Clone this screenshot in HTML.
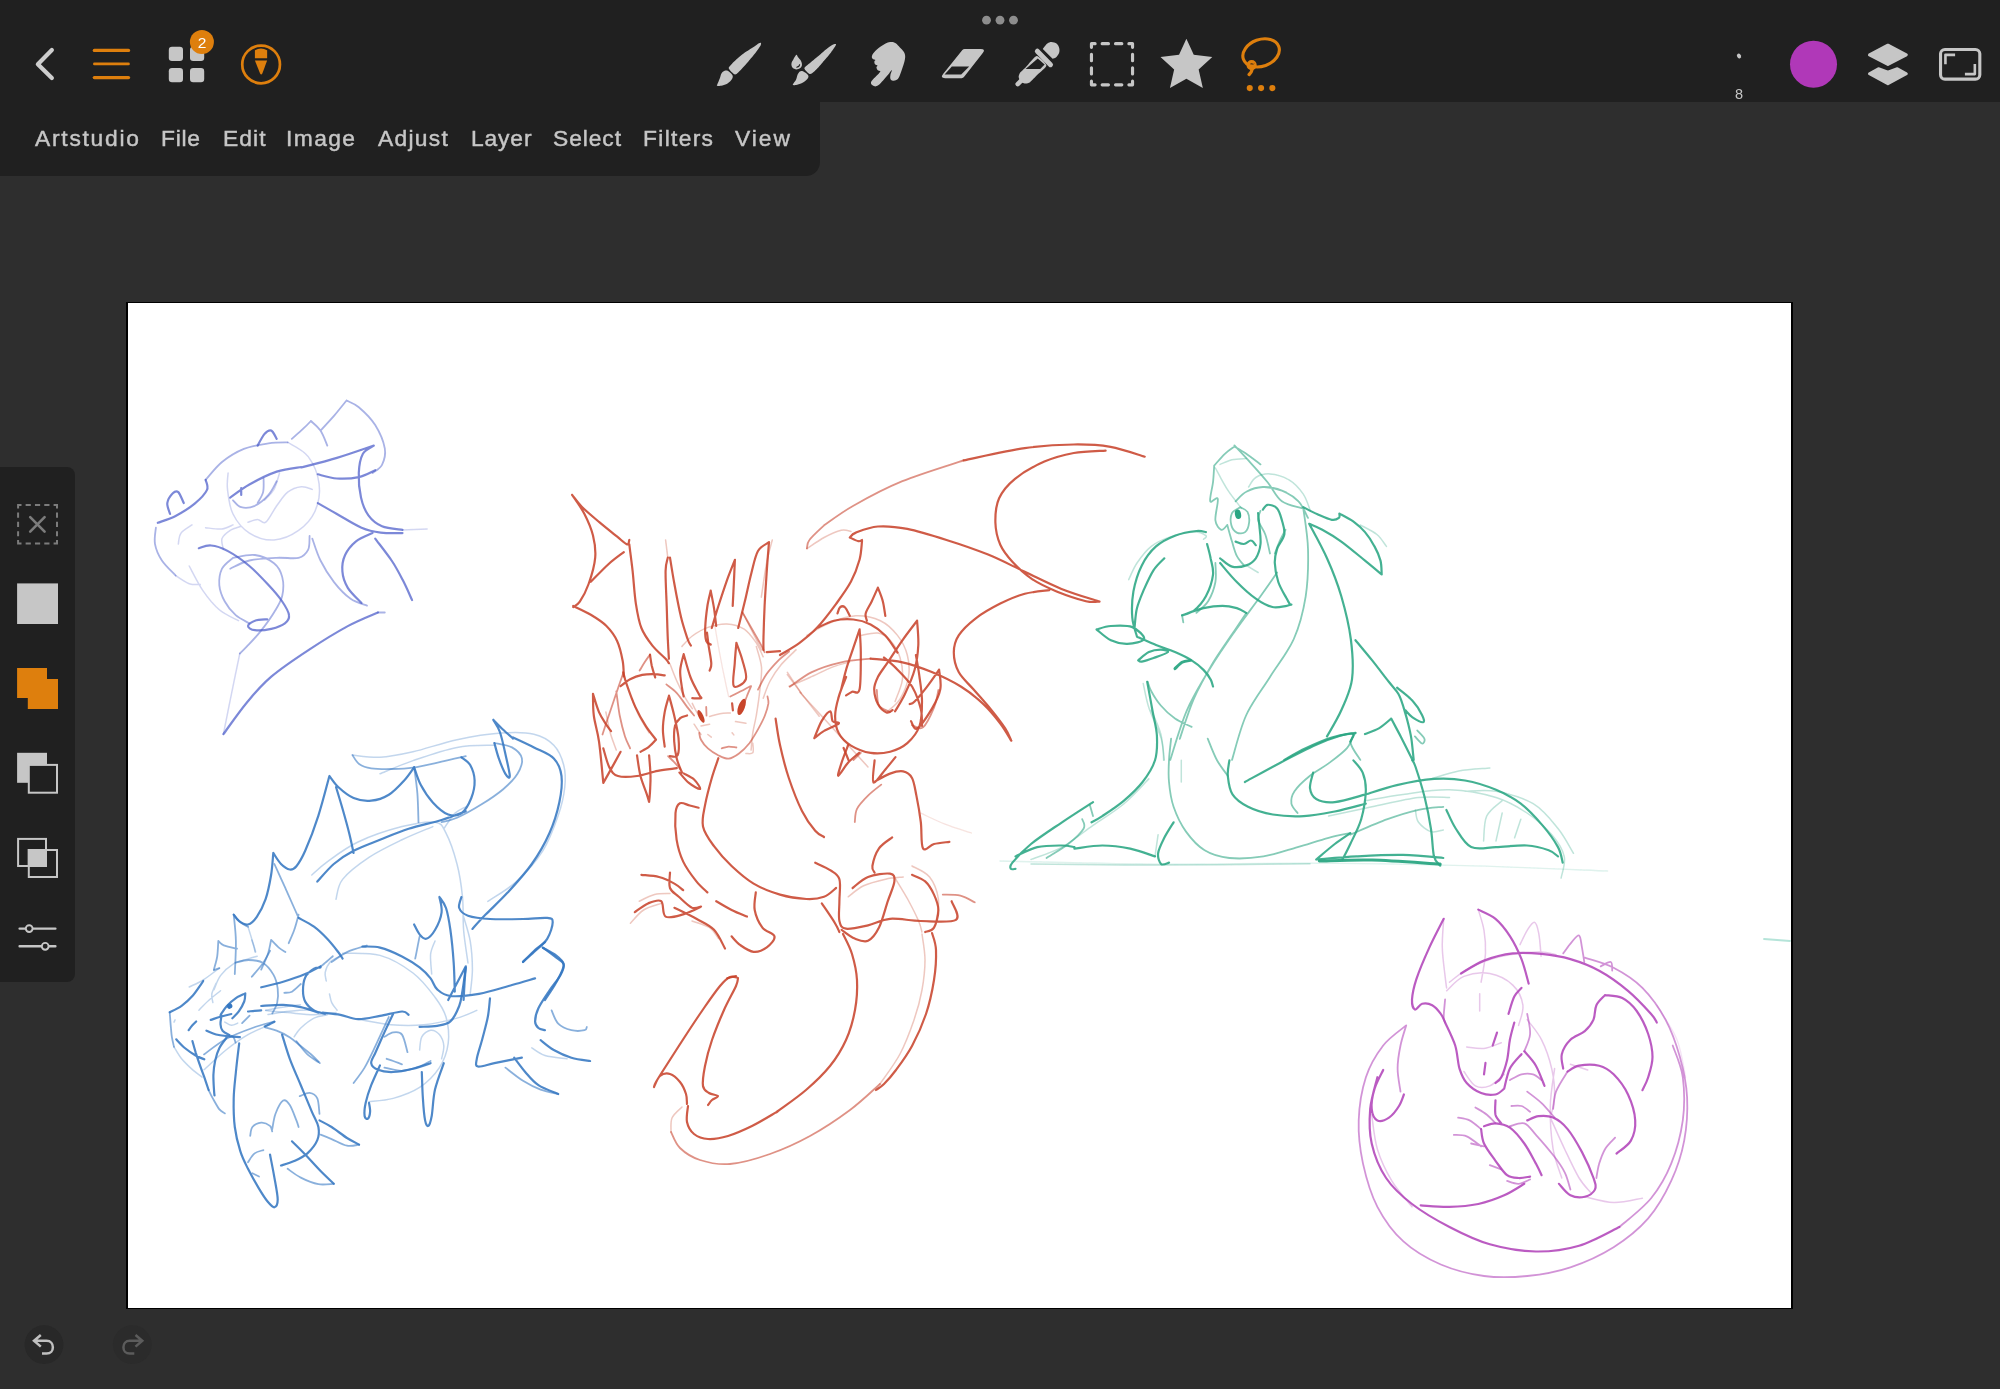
<!DOCTYPE html>
<html lang="en">
<head>
<meta charset="utf-8">
<title>Artstudio Pro</title>
<style>
html,body{margin:0;padding:0;}
body{width:2000px;height:1389px;overflow:hidden;background:#2e2e2e;position:relative;font-family:"Liberation Sans",sans-serif;}
#topbar{position:absolute;left:0;top:0;width:2000px;height:101.5px;background:#202020;}
#menubar{position:absolute;left:0;top:101px;width:819.8px;height:74.7px;background:#202020;border-bottom-right-radius:14px;}
#menubar span{will-change:transform;position:absolute;top:23.3px;font-size:22.8px;line-height:28px;color:#c6c6c6;white-space:nowrap;-webkit-text-stroke:0.45px #c6c6c6;}
#sidebar{position:absolute;left:0;top:467px;width:74.6px;height:514.5px;background:#202020;border-radius:0 8px 8px 0;}
#canvas{position:absolute;left:126px;top:301.5px;width:1667px;height:1007.5px;background:#000;}
#paper{position:absolute;left:128px;top:303px;width:1663px;height:1004.5px;background:#fff;}
svg{position:absolute;left:0;top:0;overflow:visible;}
#brushsize{will-change:transform;position:absolute;left:1727.7px;top:85.6px;width:22px;text-align:center;font-size:14.5px;line-height:16px;color:#c6c6c6;}
#badge{will-change:transform;position:absolute;left:189.9px;top:30.8px;width:24px;height:24px;color:#fff;font-size:15.5px;line-height:24px;text-align:center;}
</style>
</head>
<body>
<div id="topbar"></div>
<div id="menubar">
<span style="left:35px;letter-spacing:1.75px">Artstudio</span>
<span style="left:161px;letter-spacing:0.77px">File</span>
<span style="left:222.8px;letter-spacing:1.07px">Edit</span>
<span style="left:286px;letter-spacing:1.42px">Image</span>
<span style="left:378.3px;letter-spacing:1.28px">Adjust</span>
<span style="left:471px;letter-spacing:0.87px">Layer</span>
<span style="left:553.2px;letter-spacing:0.93px">Select</span>
<span style="left:643px;letter-spacing:1.32px">Filters</span>
<span style="left:734.5px;letter-spacing:2.0px">View</span>
</div>
<div id="sidebar"></div>
<div id="canvas"></div>
<div id="paper"></div>
<!--ART0-->
<svg id="art" width="2000" height="1389" viewBox="0 0 2000 1389" fill="none" stroke-linecap="round" stroke-linejoin="round">
<defs><filter id="soft" x="100" y="280" width="1720" height="1050" filterUnits="userSpaceOnUse"><feGaussianBlur stdDeviation="0.45"/></filter></defs>
<g filter="url(#soft)">
<path stroke="#4558c8" stroke-width="1.8" opacity="0.464" d="M320.5 430.6C322.8 428.1 329.8 420.6 334.2 415.6C338.5 410.5 344.4 403.0 346.5 400.5M346.5 400.5C348.5 401.6 354.0 403.2 358.8 407.3C363.6 411.4 370.9 418.3 375.2 425.1C379.5 432.0 383.6 441.8 384.8 448.4C385.9 455.0 384.1 460.7 382.0 464.8C380.0 468.9 374.0 471.6 372.5 473.0M291.8 438.8C293.6 437.2 299.5 432.2 302.7 429.2C305.9 426.3 309.6 422.4 310.9 421.0M310.9 421.0C312.5 422.6 317.8 426.5 320.5 430.6C323.2 434.7 326.2 443.1 327.3 445.6M205.6 479.8C208.4 476.9 215.7 467.2 222.0 462.0C228.4 456.9 236.2 452.0 243.9 448.9C251.7 445.8 261.2 444.5 268.5 443.4C275.8 442.4 284.5 442.5 287.7 442.4M155.9 527.7C155.7 530.4 154.0 538.6 155.0 544.1C156.0 549.6 158.5 555.3 161.9 560.5C165.3 565.7 173.3 573.0 175.6 575.5M233.0 500.3C234.3 501.5 237.5 506.3 241.2 507.2C244.8 508.1 250.3 507.8 254.9 505.8C259.4 503.7 264.9 499.0 268.5 494.9C272.2 490.8 275.4 483.5 276.7 481.2M257.6 503.1C258.5 501.2 262.1 496.2 263.1 492.1C264.1 488.0 263.5 480.7 263.6 478.5M230.2 568.7C233.4 567.3 241.6 562.3 249.4 560.5C257.1 558.7 268.5 558.2 276.7 557.8C284.9 557.3 293.4 559.1 298.6 557.8C303.9 556.4 306.4 553.2 308.2 549.6C310.0 545.9 309.3 538.2 309.6 535.9M233.0 557.8C231.2 559.6 224.3 564.1 222.0 568.7C219.8 573.3 218.9 579.6 219.3 585.1C219.8 590.6 222.0 596.5 224.8 601.5C227.5 606.5 231.6 611.5 235.7 615.2C239.8 618.8 247.1 622.0 249.4 623.4M233.0 557.8C236.6 557.3 248.0 554.1 254.9 555.0C261.7 555.9 269.4 559.6 274.0 563.2C278.6 566.9 280.8 571.4 282.2 576.9C283.6 582.4 283.6 590.1 282.2 596.0C280.8 602.0 277.6 606.5 274.0 612.5C270.4 618.4 264.9 625.9 260.3 631.6C255.8 637.3 250.1 643.0 246.7 646.6C243.2 650.3 241.0 652.3 239.8 653.5M312.3 538.6C313.7 542.3 316.8 553.2 320.5 560.5C324.1 567.8 329.2 576.0 334.2 582.4C339.2 588.8 345.1 594.9 350.6 598.8C356.0 602.7 364.2 604.5 367.0 605.6M384.8 612.5L377.9 612.5"/>
<path stroke="#4558c8" stroke-width="2.2" opacity="0.704" d="M301.3 467.5C307.3 465.9 324.8 461.6 336.9 457.9C349.0 454.3 367.7 447.7 373.8 445.6M373.8 445.6C372.0 447.0 365.4 449.3 362.9 453.8C360.4 458.4 359.1 465.7 358.8 473.0C358.5 480.3 359.4 490.5 361.0 497.6C362.6 504.7 364.8 510.6 368.4 515.4C371.9 520.2 376.3 523.9 382.0 526.3C387.7 528.7 399.1 529.3 402.5 529.9M317.8 474.3C320.9 475.0 330.1 478.0 336.9 478.5C343.7 478.9 352.4 478.5 358.8 477.1C365.2 475.7 372.5 471.4 375.2 470.2M257.6 445.6C258.7 443.7 262.2 436.7 264.4 434.1C266.7 431.6 269.2 429.8 271.3 430.6C273.3 431.4 275.8 437.4 276.7 438.8M157.8 522.8C160.7 521.6 169.4 519.1 175.6 515.9C181.7 512.7 189.5 507.9 194.7 503.6C199.9 499.3 205.2 493.9 207.0 489.9C208.8 486.0 205.9 481.5 205.6 479.8M170.1 514.0C169.6 512.2 166.9 506.5 167.3 503.1C167.8 499.6 171.0 495.0 172.8 493.2C174.6 491.4 176.5 490.5 178.3 492.1C180.1 493.8 182.8 501.2 183.8 503.1M230.2 497.6C233.4 495.4 241.6 488.8 249.4 484.5C257.1 480.1 268.1 474.5 276.7 471.6C285.4 468.7 297.2 467.7 301.3 467.0M241.2 488.0L241.2 494.9M198.8 548.2C200.8 547.7 206.3 545.0 211.1 545.5C215.9 545.9 221.1 547.5 227.5 550.9C233.9 554.3 242.6 560.3 249.4 566.0C256.2 571.7 263.1 579.2 268.5 585.1C274.0 591.0 278.8 596.5 282.2 601.5C285.6 606.5 288.6 611.5 289.0 615.2C289.5 618.8 287.9 621.1 284.9 623.4C282.0 625.7 276.3 627.7 271.3 628.9C266.3 630.0 258.7 630.7 254.9 630.2C251.0 629.8 248.0 627.7 248.0 626.1C248.0 624.5 251.7 621.8 254.9 620.7C258.0 619.5 265.1 619.5 267.2 619.3M317.8 503.1C320.9 504.9 329.6 509.9 336.9 514.0C344.2 518.1 354.2 524.6 361.5 527.7C368.8 530.8 373.8 531.7 380.7 532.6C387.5 533.5 398.9 533.1 402.5 533.1M372.5 533.1C369.7 534.5 360.6 537.7 356.0 541.3C351.5 545.0 347.4 550.0 345.1 555.0C342.8 560.0 341.9 566.0 342.4 571.4C342.8 576.9 344.6 582.6 347.8 587.8C351.0 593.1 359.2 600.4 361.5 602.9M375.2 538.6C377.9 542.3 387.0 553.7 391.6 560.5C396.2 567.3 399.1 573.0 402.5 579.6C406.0 586.2 410.5 596.7 412.1 600.1M377.9 612.5C372.9 614.7 359.2 620.0 347.8 626.1C336.4 632.3 322.3 640.9 309.6 649.4C296.8 657.8 281.8 667.8 271.3 676.7C260.8 685.6 254.6 693.1 246.7 702.7C238.7 712.3 227.3 728.9 223.4 734.1"/>
<path stroke="#4558c8" stroke-width="1.5" opacity="0.24" d="M402.5 529.9L427.1 529.0M287.7 442.4C291.1 444.7 302.9 449.6 308.2 456.6C313.4 463.5 318.0 474.8 319.1 483.9C320.3 493.0 318.4 503.5 315.0 511.3C311.6 519.0 305.5 525.6 298.6 530.4C291.8 535.2 282.2 539.5 274.0 540.0C265.8 540.4 256.2 537.5 249.4 533.1C242.6 528.8 236.6 521.3 233.0 514.0C229.3 506.7 228.3 496.2 227.5 489.4C226.7 482.6 228.0 475.7 228.1 473.0M175.6 575.5C177.8 576.9 185.1 582.2 189.2 583.7C193.3 585.2 198.3 584.4 200.2 584.6M264.4 500.3C266.0 498.5 271.5 493.9 274.0 489.4C276.5 484.8 278.6 475.7 279.5 473.0M248.0 522.2C249.6 521.8 254.6 519.5 257.6 519.5C260.6 519.5 262.6 524.5 265.8 522.2C269.0 519.9 273.1 510.8 276.7 505.8C280.4 500.8 283.6 495.3 287.7 492.1C291.8 488.9 297.2 487.1 301.3 486.7C305.5 486.2 310.5 488.9 312.3 489.4M223.4 549.6C223.2 547.7 220.9 541.8 222.0 538.6C223.2 535.4 227.1 532.5 230.2 530.4C233.4 528.4 239.4 527.0 241.2 526.3M178.3 544.1C178.7 542.3 178.7 536.3 181.0 533.1C183.3 530.0 190.1 526.3 192.0 524.9M205.6 527.7C208.4 527.9 217.5 529.5 222.0 529.0C226.6 528.6 231.2 525.6 233.0 524.9M239.8 653.5C238.7 658.9 235.7 672.8 233.0 686.3C230.2 699.7 225.0 726.2 223.4 734.1M189.2 566.0C191.5 570.1 197.9 583.3 202.9 590.6C207.9 597.9 213.4 604.7 219.3 609.7C225.2 614.7 235.3 618.8 238.5 620.7"/>
<path stroke="#3577c2" stroke-width="2.2" opacity="0.88" d="M493.3 719.9C494.9 721.5 499.9 726.7 503.2 729.8C506.5 732.9 511.5 737.1 513.1 738.6M513.1 737.5C516.6 739.1 527.2 743.9 534.0 747.4C540.8 750.9 549.2 753.6 553.8 758.4C558.4 763.2 560.6 768.7 561.5 776.0C562.4 783.3 561.3 792.9 559.3 802.4C557.3 811.9 554.0 822.9 549.4 833.2C544.8 843.5 538.8 854.1 531.8 864.0C524.8 873.9 515.3 884.2 507.6 892.6C499.9 901.0 491.5 908.6 485.6 914.6C479.7 920.6 474.6 926.5 472.4 928.9M493.3 719.9C494.4 721.9 497.9 726.3 499.9 732.0C501.9 737.7 503.8 746.7 505.4 754.0C507.0 761.3 509.8 772.7 509.8 776.0C509.8 779.3 507.2 776.7 505.4 773.8C503.6 770.9 500.6 763.5 498.8 758.4C497.0 753.3 495.1 745.6 494.4 743.0M329.4 776.0C330.9 777.8 334.2 783.3 338.2 787.0C342.2 790.7 348.1 795.7 353.6 798.0C359.1 800.3 365.3 801.2 371.2 800.6C377.1 800.1 383.3 798.1 388.8 794.7C394.3 791.3 400.0 785.0 404.2 780.4C408.4 775.8 412.5 769.4 414.1 767.2M414.1 767.2C415.2 770.1 417.6 778.9 420.7 784.8C423.8 790.7 428.2 797.4 432.8 802.4C437.4 807.4 443.4 812.7 448.2 814.5C453.0 816.3 457.5 816.1 461.4 813.4C465.2 810.6 469.1 803.5 471.3 798.0C473.5 792.5 474.8 785.9 474.6 780.4C474.4 774.9 472.4 768.9 470.2 765.0C468.0 761.1 462.9 758.6 461.4 757.3M329.4 776.0C327.6 782.6 322.4 803.1 318.4 815.6C314.4 828.1 308.9 842.4 305.2 850.8C301.5 859.2 299.0 863.1 296.4 866.2C293.8 869.3 292.4 869.9 289.8 869.5C287.2 869.1 283.8 866.8 281.0 864.0C278.2 861.2 274.6 854.8 273.3 853.0M336.0 787.0C337.1 790.7 340.4 801.3 342.6 809.0C344.8 816.7 347.4 825.9 349.2 833.2C351.0 840.5 352.9 849.7 353.6 853.0M273.3 853.0C272.9 856.7 272.4 867.3 271.1 875.0C269.8 882.7 268.0 892.2 265.6 899.2C263.2 906.2 259.7 912.6 256.8 916.8C253.9 921.0 250.9 923.8 248.0 924.5C245.1 925.2 241.6 922.9 239.2 921.2C236.8 919.6 234.6 915.7 233.7 914.6M317.3 881.6C320.1 878.7 327.8 869.1 333.8 864.0C339.9 858.9 345.9 854.8 353.6 850.8C361.3 846.8 370.8 843.5 380.0 839.8C389.2 836.1 398.3 832.1 408.6 828.8C418.9 825.5 432.1 822.9 441.6 820.0C451.1 817.1 461.8 812.7 465.8 811.2M461.4 897.0C461.0 898.8 458.1 904.9 459.2 908.0C460.3 911.1 462.9 913.9 468.0 915.7C473.1 917.5 480.8 918.5 490.0 919.0C499.2 919.5 513.5 919.2 523.0 919.0C532.5 918.8 542.2 917.4 547.2 917.9C552.2 918.4 552.7 918.8 552.7 922.3C552.7 925.8 550.3 933.8 547.2 938.8C544.1 943.8 538.0 948.1 534.0 952.0C530.0 955.9 524.8 960.2 523.0 961.9M542.8 947.6C545.0 949.2 552.5 954.6 556.0 957.5C559.5 960.4 563.7 961.0 563.7 965.2C563.7 969.4 559.1 977.0 556.0 982.8C552.9 988.6 546.8 997.1 545.0 1000.0M414.1 924.5C415.0 926.1 417.6 932.0 419.6 934.4C421.6 936.8 423.6 939.5 426.2 938.8C428.8 938.1 432.4 934.4 435.0 930.0C437.6 925.6 440.9 917.9 441.6 912.4C442.3 906.9 439.8 899.6 439.4 897.0M439.4 897.0C440.5 898.8 444.2 902.5 446.0 908.0C447.8 913.5 449.1 920.8 450.4 930.0C451.7 939.2 453.0 952.7 453.7 963.0C454.4 973.3 454.6 986.8 454.8 991.6M298.6 917.9C301.2 919.4 309.2 923.2 314.0 926.7C318.8 930.2 323.2 934.6 327.2 938.8C331.2 943.0 335.6 948.7 338.2 952.0C340.8 955.3 341.9 957.5 342.6 958.6M362.4 946.5C365.3 946.7 373.4 946.0 380.0 947.6C386.6 949.2 395.4 953.1 402.0 956.4C408.6 959.7 414.8 963.7 419.6 967.4C424.4 971.1 427.7 974.7 430.6 978.4C433.5 982.1 433.9 986.5 437.2 989.4C440.5 992.3 443.4 995.3 450.4 996.0C457.4 996.7 468.7 995.6 479.0 993.8C489.3 992.0 502.6 987.6 512.0 985.0C521.4 982.4 531.2 979.5 535.1 978.4M465.8 966.3C465.6 968.7 465.1 975.0 464.7 980.6C464.3 986.2 463.8 996.7 463.6 1000.0M465.8 966.3C464.0 969.8 457.7 981.6 454.8 987.2C451.9 992.8 449.3 997.8 448.2 1000.0"/>
<path stroke="#3577c2" stroke-width="1.5" opacity="0.3" d="M352.5 755.1C357.1 755.5 369.9 757.8 380.0 757.3C390.1 756.8 400.2 754.7 413.0 751.8C425.8 748.9 442.3 742.8 457.0 739.7C471.7 736.6 488.2 734.0 501.0 733.1C513.8 732.2 525.2 732.2 534.0 734.2C542.8 736.2 548.8 740.1 553.8 745.2C558.8 750.3 561.9 758.0 563.7 765.0C565.5 772.0 565.7 778.6 564.8 787.0C563.9 795.4 561.9 805.0 558.2 815.6C554.5 826.2 549.8 839.8 542.8 850.8C535.8 861.8 525.6 873.2 516.4 881.6C507.2 890.0 492.6 898.1 487.8 901.4M380.0 773.8C385.5 771.6 400.2 765.0 413.0 760.6C425.8 756.2 443.4 750.0 457.0 747.4C470.6 744.8 488.2 745.6 494.4 745.2M311.8 875.0C314.4 872.8 319.5 867.3 327.2 861.8C334.9 856.3 345.5 847.9 358.0 842.0C370.5 836.1 389.2 829.9 402.0 826.6C414.8 823.3 427.7 821.1 435.0 822.2C442.3 823.3 442.3 826.2 446.0 833.2C449.7 840.2 454.2 853.4 457.0 864.0C459.8 874.6 461.4 886.0 462.5 897.0C463.6 908.0 462.7 919.0 463.6 930.0C464.5 941.0 467.3 957.5 468.0 963.0M336.0 899.2C337.1 895.9 337.1 886.4 342.6 879.4C348.1 872.4 359.1 864.0 369.0 857.4C378.9 850.8 391.4 844.9 402.0 839.8C412.6 834.7 427.7 828.8 432.8 826.6M443.8 828.8C445.6 826.2 451.1 817.1 454.8 813.4C458.5 809.7 464.0 807.9 465.8 806.8M248.0 926.7C248.7 929.1 251.1 936.8 252.4 941.0C253.7 945.2 255.1 950.2 255.7 952.0M435.0 941.0C434.3 943.2 431.2 948.7 430.6 954.2C430.1 959.7 431.5 970.7 431.7 974.0M463.6 916.8C464.7 920.8 468.7 932.2 470.2 941.0C471.7 949.8 472.4 960.8 472.4 969.6C472.4 978.4 470.6 989.8 470.2 993.8"/>
<path stroke="#3577c2" stroke-width="1.8" opacity="0.58" d="M352.5 755.1C353.6 756.6 356.0 761.7 359.1 763.9C362.2 766.1 365.9 767.5 371.2 768.3C376.5 769.1 384.0 769.1 391.0 769.0C398.0 768.9 404.6 768.9 413.0 767.6C421.4 766.4 432.8 763.6 441.6 761.7C450.4 759.8 461.8 757.1 465.8 756.2M494.4 743.0C497.3 743.7 507.4 744.8 512.0 747.4C516.6 750.0 521.0 754.0 521.9 758.4C522.8 762.8 520.6 768.7 517.5 773.8C514.4 778.9 509.2 784.1 503.2 789.2C497.1 794.3 488.9 799.8 481.2 804.6C473.5 809.4 463.6 814.9 457.0 817.8C450.4 820.7 444.2 821.5 441.6 822.2M414.1 767.2C414.7 771.6 416.7 784.4 417.4 793.6C418.1 802.8 418.3 817.4 418.5 822.2M274.4 864.0C276.2 868.0 282.1 880.9 285.4 888.2C288.7 895.5 292.0 903.0 294.2 908.0C296.4 913.0 297.9 916.2 298.6 917.9M419.6 936.6C419.2 938.4 418.1 943.9 417.4 947.6C416.7 951.3 415.6 956.8 415.2 958.6M298.6 914.6C297.9 917.2 295.9 925.2 294.2 930.0C292.5 934.8 289.6 941.0 288.7 943.2M233.7 914.6C234.1 919.0 235.7 931.1 235.9 941.0C236.1 950.9 235.0 968.5 234.8 974.0M233.7 914.6C234.8 915.9 237.9 920.3 240.3 922.3C242.7 924.3 246.7 926.0 248.0 926.7M218.3 941.0C219.2 941.7 220.7 944.1 223.8 945.4C226.9 946.7 234.8 948.2 237.0 948.7M218.3 941.0C218.1 943.6 217.9 951.6 217.2 956.4C216.5 961.2 214.4 967.4 213.9 969.6M271.1 939.9C272.4 941.2 276.4 945.6 278.8 947.6C281.2 949.6 284.3 951.3 285.4 952.0M271.1 939.9C270.6 942.3 269.5 949.2 267.8 954.2C266.1 959.2 262.3 967.0 261.2 969.6"/>
<path stroke="#3577c2" stroke-width="1.8" opacity="0.58" d="M208.6 1090.0C209.3 1091.4 211.0 1095.2 212.8 1098.4C214.6 1101.6 217.4 1106.9 219.4 1109.4C221.4 1111.9 224.0 1112.7 224.9 1113.4M333.8 1183.8C331.2 1183.8 323.9 1185.2 318.4 1184.2C312.9 1183.2 305.9 1180.2 300.8 1177.6C295.7 1175.0 289.8 1170.3 287.6 1168.8M359.1 1144.6C357.1 1144.8 351.6 1146.6 347.0 1145.7C342.4 1144.8 336.0 1140.9 331.6 1139.1C327.2 1137.3 322.4 1135.4 320.6 1134.7M250.2 1135.8C250.6 1134.3 250.6 1129.2 252.4 1127.0C254.2 1124.8 258.3 1122.8 261.2 1122.6C264.1 1122.4 268.2 1124.4 270.0 1125.9C271.8 1127.4 271.8 1130.5 272.2 1131.4M272.2 1129.2C272.8 1126.6 273.7 1118.6 275.5 1113.8C277.3 1109.0 280.8 1102.1 283.2 1100.6C285.6 1099.1 287.6 1101.7 289.8 1105.0C292.0 1108.3 294.9 1116.7 296.4 1120.4C297.9 1124.1 298.2 1125.9 298.6 1127.0M299.7 1096.2C301.4 1095.7 306.7 1092.5 309.6 1092.9C312.5 1093.3 315.7 1094.9 317.3 1098.4C318.9 1101.9 319.1 1111.2 319.5 1113.8M248.0 1162.2C249.1 1160.7 252.0 1155.4 254.6 1153.4C257.2 1151.4 261.9 1150.6 263.4 1150.1M252.4 1173.2L259.0 1176.5M284.3 992.8C285.6 992.6 289.2 993.2 292.0 991.7C294.8 990.2 299.3 985.3 300.8 984.0M331.6 962.0C334.2 960.4 341.1 954.9 347.0 952.1C352.9 949.4 363.5 946.6 366.8 945.5M430.6 1061.0C428.8 1061.9 424.4 1064.8 419.6 1066.5C414.8 1068.2 407.9 1070.7 402.0 1070.9C396.1 1071.1 387.3 1068.1 384.4 1067.6M384.4 1036.8C385.9 1036.1 390.3 1032.8 393.2 1032.4C396.1 1032.0 399.6 1031.3 402.0 1034.6C404.4 1037.9 406.6 1049.3 407.5 1052.2M386.6 1058.8C387.7 1059.2 390.6 1060.1 393.2 1061.0C395.8 1061.9 400.5 1063.8 402.0 1064.3M353.6 1083.0C355.4 1080.4 360.9 1073.8 364.6 1067.6C368.3 1061.4 371.6 1054.0 375.6 1045.6C379.6 1037.2 386.6 1021.8 388.8 1017.0M551.6 1010.4C552.7 1012.6 554.9 1020.3 558.2 1023.6C561.5 1026.9 567.0 1029.1 571.4 1030.2C575.8 1031.3 582.0 1030.8 584.6 1030.2C587.2 1029.7 586.4 1027.5 586.8 1026.9M558.2 1094.0C555.3 1093.3 546.5 1091.8 540.6 1089.6C534.7 1087.4 528.9 1084.5 523.0 1080.8C517.1 1077.1 508.3 1069.8 505.4 1067.6M296.4 1041.2C298.2 1043.4 303.7 1050.9 307.4 1054.4C311.1 1057.9 316.6 1060.8 318.4 1062.1M204.0 1054.4C207.7 1051.8 217.9 1043.4 226.0 1039.0C234.1 1034.6 244.3 1030.9 252.4 1028.0C260.5 1025.1 270.7 1022.5 274.4 1021.4"/>
<path stroke="#3577c2" stroke-width="2.2" opacity="0.88" d="M239.2 1043.4C238.6 1048.2 236.8 1062.8 235.9 1072.0C235.0 1081.2 233.9 1089.2 233.7 1098.4C233.5 1107.6 233.7 1118.2 234.8 1127.0C235.9 1135.8 238.1 1144.2 240.3 1151.2C242.5 1158.2 244.9 1162.6 248.0 1168.8C251.1 1175.0 255.7 1183.1 259.0 1188.6C262.3 1194.1 265.2 1198.7 267.8 1201.8C270.4 1204.9 272.8 1207.7 274.4 1207.3C276.0 1206.9 277.7 1204.5 277.7 1199.6C277.7 1194.6 275.7 1185.1 274.4 1177.6C273.1 1170.1 270.7 1158.3 270.0 1154.5M282.1 1034.6C283.4 1038.6 286.7 1050.4 289.8 1058.8C292.9 1067.2 297.1 1076.4 300.8 1085.2C304.5 1094.0 308.9 1104.6 311.8 1111.6C314.7 1118.6 317.5 1122.2 318.4 1127.0C319.3 1131.8 319.1 1135.8 317.3 1140.2C315.5 1144.6 311.2 1149.9 307.4 1153.4C303.5 1156.9 298.6 1159.1 294.2 1161.1C289.8 1163.1 283.2 1164.8 281.0 1165.5M292.0 1141.3C294.2 1143.5 300.4 1149.5 305.2 1154.5C310.0 1159.5 315.8 1166.1 320.6 1171.0C325.4 1175.9 331.6 1181.6 333.8 1183.8M319.5 1120.4C321.5 1121.5 327.0 1124.1 331.6 1127.0C336.2 1129.9 342.4 1135.1 347.0 1138.0C351.6 1140.9 357.1 1143.5 359.1 1144.6M320.6 967.5C319.5 967.7 316.6 967.0 314.0 968.6C311.4 970.2 307.0 973.7 305.2 977.4C303.4 981.1 303.0 986.6 303.0 990.6C303.0 994.6 303.4 998.3 305.2 1001.6C307.0 1004.9 310.7 1008.4 314.0 1010.4C317.3 1012.4 323.2 1013.2 325.0 1013.7M322.8 1012.6C325.7 1013.0 334.5 1013.7 340.4 1014.8C346.3 1015.9 351.4 1019.0 358.0 1019.2C364.6 1019.4 372.7 1017.2 380.0 1015.9C387.3 1014.6 397.2 1011.7 402.0 1011.5C406.8 1011.3 407.5 1014.2 408.6 1014.8M261.2 987.3C264.9 986.4 275.9 984.0 283.2 981.8C290.5 979.6 299.0 976.7 305.2 974.1C311.4 971.5 318.0 967.7 320.6 966.4M419.6 1026.9C422.5 1026.7 432.1 1026.7 437.2 1025.8C442.3 1024.9 446.7 1024.7 450.4 1021.4C454.1 1018.1 457.2 1011.1 459.2 1006.0C461.2 1000.9 461.4 997.0 462.5 990.6C463.6 984.2 465.2 971.4 465.8 967.5M393.2 1013.7C391.7 1016.8 387.3 1026.0 384.4 1032.4C381.5 1038.8 377.8 1047.1 375.6 1052.2C373.4 1057.3 370.8 1060.3 371.2 1063.2C371.6 1066.1 374.1 1068.3 377.8 1069.8C381.5 1071.3 387.3 1072.2 393.2 1072.0C399.1 1071.8 406.8 1070.2 413.0 1068.7C419.2 1067.2 427.7 1064.1 430.6 1063.2M380.0 1065.4C378.5 1068.7 373.6 1079.0 371.2 1085.2C368.8 1091.4 366.8 1097.7 365.7 1102.8C364.6 1107.9 364.2 1113.4 364.6 1116.0C365.0 1118.6 367.0 1119.4 367.9 1118.6C368.8 1117.9 369.9 1114.2 370.1 1111.6C370.3 1109.0 369.2 1104.3 369.0 1102.8M421.8 1072.0C422.0 1076.4 422.3 1090.3 422.9 1098.4C423.4 1106.5 424.2 1115.8 425.1 1120.4C426.0 1125.0 427.3 1126.6 428.4 1125.9C429.5 1125.2 430.6 1122.0 431.7 1116.0C432.8 1110.0 433.0 1098.4 435.0 1089.6C437.0 1080.8 442.3 1067.6 443.8 1063.2M523.0 962.0C524.8 960.2 530.3 954.3 534.0 951.0C537.7 947.7 543.2 943.7 545.0 942.2M542.8 947.7C545.0 949.0 552.5 952.6 556.0 955.4C559.5 958.1 563.0 960.9 563.7 964.2C564.4 967.5 562.8 970.8 560.4 975.2C558.0 979.6 553.1 985.1 549.4 990.6C545.7 996.1 540.8 1003.1 538.4 1008.2C536.0 1013.3 535.1 1018.1 535.1 1021.4C535.1 1024.7 536.8 1026.5 538.4 1028.0C540.0 1029.5 543.9 1029.8 545.0 1030.2M540.6 1040.1C542.8 1041.8 548.7 1047.1 553.8 1050.0C558.9 1052.9 565.3 1055.9 571.4 1057.7C577.5 1059.5 587.0 1060.5 590.1 1061.0M490.0 998.3C489.6 1001.4 489.1 1010.2 487.8 1017.0C486.5 1023.8 484.1 1032.0 482.3 1039.0C480.5 1046.0 477.5 1054.2 476.8 1058.8C476.1 1063.4 475.0 1065.8 477.9 1066.5C480.8 1067.2 487.1 1064.7 494.4 1063.2C501.7 1061.7 517.3 1058.6 521.9 1057.7M514.2 1057.7C516.0 1060.1 521.2 1067.4 525.2 1072.0C529.2 1076.6 532.9 1081.5 538.4 1085.2C543.9 1088.9 554.9 1092.5 558.2 1094.0M261.2 1006.0C264.9 1005.8 276.6 1004.7 283.2 1004.9C289.8 1005.1 294.9 1005.8 300.8 1007.1C306.7 1008.4 315.5 1011.7 318.4 1012.6M248.0 1011.5C249.1 1011.4 252.4 1011.0 254.6 1010.8C256.8 1010.7 260.1 1010.5 261.2 1010.4"/>
<path stroke="#3577c2" stroke-width="1.5" opacity="0.3" d="M342.6 953.2C348.8 953.6 368.3 952.1 380.0 955.4C391.7 958.7 403.8 966.0 413.0 973.0C422.2 980.0 429.5 989.9 435.0 997.2C440.5 1004.5 443.8 1009.3 446.0 1017.0C448.2 1024.7 449.3 1035.0 448.2 1043.4C447.1 1051.8 444.2 1060.3 439.4 1067.6C434.6 1074.9 427.3 1082.3 419.6 1087.4C411.9 1092.5 401.6 1096.0 393.2 1098.4C384.8 1100.8 373.0 1101.2 369.0 1101.7M358.0 1019.2C363.5 1020.1 380.0 1023.8 391.0 1024.7C402.0 1025.6 413.0 1025.8 424.0 1024.7C435.0 1023.6 448.2 1020.5 457.0 1018.1C465.8 1015.7 473.5 1011.7 476.8 1010.4M419.6 1050.0C420.0 1047.8 420.0 1040.1 421.8 1036.8C423.6 1033.5 427.7 1030.6 430.6 1030.2C433.5 1029.8 437.2 1032.0 439.4 1034.6C441.6 1037.2 443.4 1041.6 443.8 1045.6C444.2 1049.6 442.0 1056.6 441.6 1058.8M531.8 1047.8C534.0 1049.1 539.1 1053.7 545.0 1055.5C550.9 1057.3 563.3 1058.2 567.0 1058.8M294.2 1036.8C295.3 1035.3 297.5 1031.1 300.8 1028.0C304.1 1024.9 309.6 1020.3 314.0 1018.1C318.4 1015.9 325.0 1015.3 327.2 1014.8M204.0 1069.8C207.7 1066.5 218.7 1055.9 226.0 1050.0C233.3 1044.1 240.7 1038.8 248.0 1034.6C255.3 1030.4 266.3 1026.3 270.0 1024.7M265.6 1010.4C269.3 1010.8 279.5 1011.9 287.6 1012.6C295.7 1013.3 305.9 1014.8 314.0 1014.8C322.1 1014.8 332.3 1013.0 336.0 1012.6"/>
<path stroke="#3577c2" stroke-width="2.2" opacity="0.88" d="M169.7 1012.3C171.7 1011.3 177.8 1008.6 181.6 1005.9C185.4 1003.2 189.2 999.7 192.4 996.1C195.6 992.5 199.2 986.8 201.0 984.3C202.8 981.8 202.8 981.6 203.2 981.0M176.2 1039.3C177.6 1040.8 181.6 1045.3 184.8 1048.0C188.1 1050.7 192.4 1053.6 195.6 1055.5C198.9 1057.4 202.8 1058.7 204.3 1059.3M192.4 1041.0C192.9 1042.8 194.4 1048.2 195.6 1052.3C196.9 1056.3 198.5 1061.1 200.0 1065.3C201.4 1069.4 202.8 1073.0 204.3 1077.1C205.7 1081.3 207.9 1087.8 208.6 1090.0M188.6 1030.2C189.2 1029.4 191.1 1026.7 192.4 1025.3C193.7 1023.9 195.5 1022.2 196.2 1021.5M245.3 993.4C243.7 994.3 238.6 996.2 235.6 998.3C232.5 1000.4 229.3 1003.3 226.9 1005.9C224.6 1008.4 222.6 1011.8 221.5 1013.4C220.5 1015.0 220.6 1015.2 220.5 1015.6M245.3 993.4C245.1 994.8 245.3 998.6 244.2 1001.5C243.1 1004.5 240.8 1008.5 238.8 1011.3C236.8 1014.1 233.4 1017.1 232.3 1018.3M210.7 1019.9C212.4 1019.4 217.0 1017.7 220.5 1016.7C223.9 1015.7 229.5 1014.4 231.3 1014.0M221.5 1015.6C221.4 1017.0 220.3 1021.7 220.5 1024.2C220.6 1026.7 221.2 1028.9 222.6 1030.7C224.1 1032.5 228.0 1034.3 229.1 1035.0M206.4 1030.7C208.1 1031.3 212.7 1033.6 216.1 1034.5C219.6 1035.4 223.0 1035.7 226.9 1036.1C230.9 1036.6 237.7 1037.0 239.9 1037.2M226.9 1037.2C225.7 1039.0 221.4 1044.0 219.4 1048.0C217.4 1051.9 216.1 1056.4 215.1 1060.9C214.1 1065.4 213.6 1070.1 213.4 1075.0C213.3 1079.8 213.8 1086.6 214.0 1090.0C214.2 1093.4 214.4 1094.6 214.5 1095.5M264.7 1026.4L274.5 1021.8"/>
<path stroke="#3577c2" stroke-width="1.5" opacity="0.3" d="M189.2 987.0C191.5 985.8 198.2 983.1 203.2 980.0C208.2 976.8 216.7 970.1 219.4 968.1M174.0 1046.9C175.3 1048.9 178.5 1055.0 181.6 1058.8C184.7 1062.6 189.0 1066.5 192.4 1069.6C195.8 1072.6 200.5 1075.9 202.1 1077.1M174.0 1022.1L175.1 1019.9M224.8 1022.1C225.9 1022.6 229.1 1025.1 231.3 1025.3C233.4 1025.5 236.7 1023.5 237.7 1023.1M214.0 989.7C215.1 987.3 217.2 980.0 220.5 975.6C223.7 971.3 229.1 966.5 233.4 963.8C237.7 961.1 242.4 960.7 246.4 959.4C250.3 958.2 255.4 956.7 257.2 956.2M212.9 1002.6C212.7 1001.2 211.3 997.2 211.8 994.0C212.4 990.7 215.4 985.0 216.1 983.2M198.9 1010.2C200.5 1008.6 205.0 1003.7 208.6 1000.5C212.2 997.2 218.5 992.4 220.5 990.7M251.8 940.0C252.1 941.1 253.4 944.5 253.9 946.5C254.5 948.5 254.8 951.0 255.0 951.9M265.8 1010.2C268.9 1009.6 278.4 1007.8 284.2 1006.9C289.9 1006.0 297.7 1005.1 300.4 1004.8M268.0 1014.5C271.6 1014.0 282.4 1012.0 289.6 1011.3C296.8 1010.5 305.2 1009.6 311.2 1010.2C317.1 1010.7 322.9 1013.8 325.2 1014.5M340.0 956.2C338.4 957.1 333.1 958.9 330.6 961.6C328.1 964.3 325.9 969.2 325.2 972.4C324.5 975.6 326.1 979.6 326.3 981.0M329.5 994.0C329.9 995.4 330.4 999.9 331.7 1002.6C332.9 1005.3 336.2 1008.9 337.1 1010.2"/>
<path stroke="#3577c2" stroke-width="1.8" opacity="0.58" d="M169.7 1012.3C169.9 1014.7 170.4 1022.2 170.8 1026.4C171.2 1030.5 171.3 1033.8 171.9 1037.2C172.4 1040.6 173.7 1045.3 174.0 1046.9M229.1 1035.0C229.8 1035.4 232.3 1035.9 233.4 1037.2C234.5 1038.4 235.2 1041.7 235.6 1042.6M235.6 962.7C237.7 962.2 244.0 960.0 248.5 960.0C253.0 960.0 258.4 960.2 262.6 962.7C266.7 965.1 270.9 970.2 273.4 974.6C275.9 978.9 277.1 983.9 277.7 988.6C278.3 993.3 278.1 998.5 277.2 1002.6C276.3 1006.8 273.1 1011.6 272.3 1013.4M214.0 970.2L219.4 968.1M251.8 976.7C253.6 974.6 259.5 968.1 262.6 963.8C265.6 959.4 268.9 953.0 270.1 950.8M265.3 1027.5C267.2 1028.0 272.6 1029.1 276.6 1030.7C280.7 1032.3 285.6 1034.7 289.6 1037.2C293.5 1039.7 296.8 1042.9 300.4 1045.8C304.0 1048.7 307.9 1051.6 311.2 1054.5C314.4 1057.3 318.4 1061.7 319.8 1063.1M242.1 1023.1L249.6 1015.6M332.8 956.2C331.3 957.5 326.3 962.0 324.1 963.8C322.0 965.6 320.5 966.5 319.8 967.0"/>
<ellipse cx="229.6" cy="1006.1" rx="2.8" ry="2.6" transform="rotate(-30 229.6 1006.1)" fill="#3577c2" stroke="none"/>
<path stroke="#c8442c" stroke-width="2.2" opacity="0.88" d="M572.1 494.9C573.8 496.9 577.4 502.4 582.0 507.0C586.6 511.6 593.7 517.4 599.6 522.4C605.5 527.4 612.6 533.0 617.2 536.7C621.8 540.4 625.1 543.9 627.1 544.4C629.1 544.9 628.9 540.7 629.3 540.0M572.1 494.9C574.1 498.0 580.7 506.8 584.2 513.6C587.7 520.4 591.2 528.3 593.0 535.6C594.8 542.9 595.9 549.5 595.2 557.6C594.5 565.7 591.2 576.7 588.6 584.0C586.0 591.3 582.4 597.8 579.8 601.6C577.2 605.5 574.3 606.2 573.2 607.1M623.8 552.1C621.2 554.1 613.9 559.2 608.4 564.2C602.9 569.2 593.7 578.9 590.8 581.8M573.2 606.0C576.1 607.5 585.3 611.5 590.8 614.8C596.3 618.1 601.8 621.4 606.2 625.8C610.6 630.2 614.5 635.3 617.2 641.2C620.0 647.1 621.6 655.1 622.7 661.0C623.8 666.9 623.6 673.8 623.8 676.4M629.3 544.4C629.8 548.8 631.5 560.9 632.6 570.8C633.7 580.7 634.4 594.3 635.9 603.8C637.4 613.3 638.6 621.0 641.4 628.0C644.1 635.0 648.4 640.5 652.4 645.6C656.4 650.7 662.9 655.9 665.6 658.8C668.4 661.7 668.4 662.5 668.9 663.2M667.8 557.6C667.4 559.8 665.8 562.7 665.6 570.8C665.4 578.9 666.3 594.6 666.7 606.0C667.1 617.4 667.4 630.2 667.8 639.0C668.2 647.8 668.7 655.5 668.9 658.8M670.0 557.6C670.7 562.0 672.6 574.1 674.4 584.0C676.2 593.9 678.8 607.8 681.0 617.0C683.2 626.2 686.0 634.2 687.6 639.0C689.2 643.8 690.4 644.5 690.9 645.6M710.7 590.6C710.2 593.2 708.3 599.8 707.4 606.0C706.5 612.2 705.4 622.1 705.2 628.0C705.0 633.9 705.4 638.5 706.3 641.2C707.2 644.0 710.0 644.0 710.7 644.5M710.7 590.6C711.2 593.5 713.1 602.3 714.0 608.2C714.9 614.1 715.8 622.9 716.2 625.8M734.9 559.8C733.6 563.1 730.0 571.9 727.2 579.6C724.5 587.3 721.0 597.9 718.4 606.0C715.8 614.1 712.9 624.3 711.8 628.0M734.9 559.8C734.7 563.8 734.2 576.3 733.8 584.0C733.4 591.7 732.9 602.3 732.7 606.0M769.0 542.2C767.2 543.7 760.9 545.9 758.0 551.0C755.1 556.1 753.6 564.6 751.4 573.0C749.2 581.4 747.0 592.4 744.8 601.6C742.6 610.8 739.3 623.6 738.2 628.0M769.0 542.2C768.6 547.0 767.5 560.2 766.8 570.8C766.1 581.4 765.1 595.0 764.6 606.0C764.1 617.0 763.7 629.5 763.5 636.8C763.3 644.1 763.5 647.8 763.5 650.0M780.0 651.1L766.8 652.2"/>
<path stroke="#c8442c" stroke-width="1.5" opacity="0.3" d="M665.6 540.0L667.8 557.6M772.3 540.0C771.4 543.7 768.6 552.5 766.8 562.0C765.0 571.5 762.2 591.3 761.3 597.2"/>
<path stroke="#c8442c" stroke-width="1.8" opacity="0.58" d="M742.6 612.6C744.1 615.2 748.5 622.9 751.4 628.0C754.3 633.1 758.0 639.4 760.2 643.4C762.4 647.4 763.9 650.7 764.6 652.2"/>
<path stroke="#c8442c" stroke-width="1.8" opacity="0.58" d="M806.9 548.5C807.3 547.1 806.5 543.8 809.4 540.0C812.2 536.1 821.6 527.7 824.1 525.3M824.1 525.3C829.0 522.0 840.4 513.0 853.4 505.7C866.5 498.3 884.0 488.7 902.4 481.2C920.8 473.7 953.4 463.9 963.6 460.4M789.8 686.8C793.5 684.4 803.3 676.2 811.8 672.1C820.4 668.1 831.4 664.6 841.2 662.4C851.0 660.1 865.7 659.3 870.6 658.7M860.8 752.9L853.4 760.0"/>
<path stroke="#c8442c" stroke-width="2.2" opacity="0.88" d="M963.6 460.4C973.8 458.4 1006.4 450.8 1024.8 448.2C1043.2 445.5 1059.5 444.7 1073.8 444.5C1088.0 444.3 1098.6 444.9 1110.5 446.9C1122.3 449.0 1139.0 455.1 1144.7 456.7M1105.6 450.6C1100.3 451.0 1084.0 451.2 1073.8 453.0C1063.6 454.9 1054.2 457.3 1044.4 461.6C1034.6 465.9 1022.6 472.6 1015.0 478.8C1007.5 484.9 1002.4 491.0 999.1 498.3C995.8 505.7 995.2 515.1 995.4 522.8C995.6 530.6 997.5 538.3 1000.3 544.8C1003.2 551.4 1007.3 556.3 1012.6 562.0C1017.9 567.7 1024.8 574.2 1032.1 579.1C1039.5 584.0 1047.6 587.7 1056.6 591.4C1065.6 595.0 1078.9 599.4 1086.0 601.2C1093.1 602.9 1097.2 601.6 1099.5 601.6M849.8 537.5C850.8 536.7 851.2 534.4 855.9 532.6C860.6 530.8 869.4 527.1 877.9 526.5C886.5 525.9 895.9 526.7 907.3 528.9C918.7 531.2 933.0 535.7 946.5 540.0C959.9 544.2 975.0 549.3 988.1 554.6C1001.1 559.9 1012.6 566.1 1024.8 571.8C1037.0 577.5 1049.1 583.9 1061.5 588.9C1074.0 593.9 1093.1 599.5 1099.5 601.6M849.8 537.5C851.2 538.1 856.3 540.8 858.3 541.2C860.4 541.6 861.4 540.2 862.0 540.0M862.0 541.2C861.6 544.2 861.4 552.8 859.6 559.5C857.7 566.3 854.9 574.2 851.0 581.6C847.1 588.9 842.0 595.8 836.3 603.6C830.6 611.4 822.8 621.6 816.7 628.1C810.6 634.6 805.7 638.3 799.6 642.8C793.5 647.3 783.3 653.0 780.0 655.0M1049.3 590.1C1045.2 590.7 1033.0 591.6 1024.8 593.8C1016.6 596.1 1008.5 599.5 1000.3 603.6C992.2 607.7 982.8 613.0 975.8 618.3C968.9 623.6 962.4 629.7 958.7 635.4C955.0 641.1 953.8 646.4 953.8 652.6C953.8 658.7 955.4 666.0 958.7 672.1C962.0 678.3 968.1 683.2 973.4 689.3C978.7 695.4 985.2 702.3 990.5 708.9C995.8 715.4 1001.7 723.1 1005.2 728.4C1008.7 733.7 1010.3 738.6 1011.3 740.7M870.6 658.7C875.9 659.3 892.2 660.1 902.4 662.4C912.6 664.6 922.0 668.1 931.8 672.1C941.6 676.2 952.6 681.5 961.2 686.8C969.7 692.1 976.7 697.8 983.2 704.0C989.7 710.1 995.6 717.4 1000.3 723.5C1005.0 729.7 1009.5 737.8 1011.3 740.7M846.1 677.0C844.9 680.3 840.6 690.1 838.8 696.6C836.9 703.1 835.1 710.1 835.1 716.2C835.1 722.3 836.1 728.4 838.8 733.3C841.4 738.2 845.7 742.3 851.0 745.6C856.3 748.8 864.0 751.9 870.6 752.9C877.1 753.9 884.0 753.3 890.2 751.7C896.3 750.1 902.4 747.4 907.3 743.1C912.2 738.8 917.1 732.9 919.5 726.0C922.0 719.1 922.0 709.7 922.0 701.5C922.0 693.4 920.6 684.8 919.5 677.0C918.5 669.3 916.5 658.7 915.9 655.0M877.9 587.7C876.9 589.9 873.8 596.9 871.8 601.2C869.8 605.4 866.5 610.1 865.7 613.4C864.9 616.7 866.7 619.5 866.9 620.7M877.9 587.7C878.7 589.9 881.6 596.5 882.8 601.2C884.0 605.8 884.9 613.4 885.3 615.8M837.5 613.4C837.9 612.4 838.8 608.3 840.0 607.3C841.2 606.3 843.2 605.8 844.9 607.3C846.5 608.7 849.0 614.4 849.8 615.8M859.6 629.3C858.5 632.4 855.7 640.9 853.4 647.7C851.2 654.4 848.1 662.8 846.1 669.7C844.1 676.6 842.0 686.0 841.2 689.3M859.6 629.3C859.8 633.2 860.8 642.6 860.8 652.6C860.8 662.6 861.0 682.7 859.6 689.3C858.1 695.8 854.5 690.7 852.2 691.7C850.0 692.7 847.1 694.8 846.1 695.4M917.1 620.7C914.6 624.0 907.3 633.4 902.4 640.3C897.5 647.3 891.8 656.2 887.7 662.4C883.6 668.5 880.2 672.5 877.9 677.0C875.7 681.5 874.2 684.8 874.2 689.3C874.2 693.8 875.9 700.1 877.9 704.0C880.0 707.8 884.0 711.5 886.5 712.5C888.9 713.6 891.6 710.5 892.6 710.1M917.1 620.7C917.3 624.8 918.7 637.1 918.3 645.2C917.9 653.4 916.9 661.5 914.6 669.7C912.4 677.9 908.1 687.2 904.8 694.2C901.6 701.1 896.7 708.5 895.1 711.3M939.1 669.7C937.1 672.5 931.0 681.5 926.9 686.8C922.8 692.1 917.5 698.7 914.6 701.5C911.8 704.4 910.6 703.6 909.7 704.0M939.1 669.7C939.3 673.0 941.6 682.7 940.3 689.3C939.1 695.8 935.7 702.3 931.8 708.9C927.9 715.4 920.6 726.4 917.1 728.4C913.6 730.5 912.0 722.3 911.0 721.1M884.0 657.5C886.3 659.5 892.8 664.8 897.5 669.7C902.2 674.6 908.3 680.3 912.2 686.8C916.1 693.4 919.1 702.3 920.8 708.9C922.4 715.4 921.8 723.1 922.0 726.0M816.7 628.1C819.6 626.9 827.7 622.2 833.9 620.7C840.0 619.3 847.3 618.9 853.4 619.5C859.6 620.1 865.3 621.8 870.6 624.4C875.9 627.1 880.8 630.7 885.3 635.4C889.8 640.1 895.5 649.7 897.5 652.6M814.3 738.2C815.5 735.4 819.0 725.6 821.6 721.1C824.3 716.6 828.3 711.3 830.2 711.3C832.0 711.3 831.2 719.1 832.6 721.1C834.1 723.1 840.2 721.9 838.8 723.5C837.3 725.2 828.1 728.4 824.1 730.9C820.0 733.3 815.9 737.0 814.3 738.2M843.6 748.0L848.5 760.0"/>
<path stroke="#c8442c" stroke-width="1.5" opacity="0.3" d="M806.9 548.5C809.8 546.7 818.4 540.6 824.1 537.5C829.8 534.4 836.7 531.2 841.2 530.2C845.7 529.1 849.4 531.2 851.0 531.4M806.9 635.4C810.6 633.4 820.8 626.4 829.0 623.2C837.1 619.9 847.3 616.2 855.9 615.8C864.5 615.4 873.4 617.5 880.4 620.7C887.3 624.0 893.0 629.7 897.5 635.4C902.0 641.1 905.5 648.1 907.3 655.0C909.1 661.9 909.7 669.7 908.5 677.0C907.3 684.4 903.4 693.4 900.0 699.1C896.5 704.8 889.8 709.3 887.7 711.3M860.8 635.4C863.6 635.0 873.0 632.2 877.9 633.0C882.8 633.8 886.5 636.2 890.2 640.3C893.8 644.4 897.9 650.9 900.0 657.5C902.0 664.0 903.2 672.1 902.4 679.5C901.6 686.8 896.3 697.8 895.1 701.5M787.3 674.6C789.8 677.9 796.7 687.2 802.0 694.2C807.3 701.1 816.3 712.5 819.2 716.2"/>
<path stroke="#c8442c" stroke-width="2.2" opacity="0.88" d="M718.4 758.2C717.3 761.5 714.0 770.3 711.8 778.0C709.6 785.7 706.7 796.3 705.2 804.4C703.7 812.5 701.5 819.4 703.0 826.4C704.5 833.4 709.2 839.6 714.0 846.2C718.8 852.8 725.0 859.8 731.6 866.0C738.2 872.2 745.5 878.8 753.6 883.6C761.7 888.4 771.2 892.0 780.0 894.6C788.8 897.2 799.1 898.6 806.4 899.0C813.7 899.4 819.0 898.6 824.0 896.8C829.0 895.0 834.1 889.5 836.1 888.0M775.6 718.6C776.3 723.0 777.8 735.1 780.0 745.0C782.2 754.9 785.1 767.0 788.8 778.0C792.5 789.0 797.6 802.2 802.0 811.0C806.4 819.8 811.5 826.5 815.2 830.8C818.9 835.1 822.5 835.9 824.0 837.0M698.6 807.7C697.1 807.3 692.9 806.2 689.8 805.5C686.7 804.8 682.3 802.0 679.9 803.3C677.5 804.6 676.0 807.2 675.5 813.2C675.0 819.2 675.3 831.5 676.6 839.6C677.9 847.7 679.9 854.6 683.2 861.6C686.5 868.6 692.4 876.3 696.4 881.4C700.4 886.5 705.6 890.6 707.4 892.4M815.2 862.7C817.8 864.0 826.6 867.6 830.6 870.4C834.6 873.1 837.9 874.1 839.4 879.2C840.9 884.3 839.4 894.2 839.4 901.2C839.4 908.2 838.3 916.4 839.4 921.0C840.5 925.6 841.2 928.0 846.0 928.7C850.8 929.4 860.7 927.0 868.0 925.4C875.3 923.8 881.2 919.5 890.0 918.8C898.8 918.1 909.8 920.8 920.8 921.0C931.8 921.2 950.9 923.2 956.0 919.9C961.1 916.6 952.3 904.3 951.6 901.2M848.2 745.0C847.1 747.9 843.2 757.5 841.6 762.6C840.0 767.7 837.2 775.8 838.3 775.8C839.4 775.8 844.7 766.5 848.2 762.6C851.7 758.8 857.4 754.4 859.2 752.7M874.6 760.4C874.4 764.1 871.7 780.9 873.5 782.4C875.3 783.9 881.9 773.4 885.6 769.2C889.3 765.0 893.9 759.1 895.5 757.1M873.5 782.4C876.2 780.9 885.0 775.4 890.0 773.6C895.0 771.8 899.5 770.7 903.2 771.4C906.9 772.1 909.8 774.0 912.0 778.0C914.2 782.0 914.9 788.3 916.4 795.6C917.9 802.9 919.7 813.2 920.8 822.0C921.9 830.8 920.8 844.7 923.0 848.4C925.2 852.1 929.6 845.1 934.0 844.0C938.4 842.9 946.8 842.2 949.4 841.8M892.2 837.4C890.0 839.2 882.3 843.6 879.0 848.4C875.7 853.2 873.1 862.0 872.4 866.0C871.7 870.0 874.2 871.5 874.6 872.6M852.6 888.0C855.2 886.2 861.8 879.4 868.0 877.0C874.2 874.6 885.6 873.0 890.0 873.7C894.4 874.4 894.8 876.8 894.4 881.4C894.0 886.0 890.4 893.5 887.8 901.2C885.2 908.9 882.3 921.0 879.0 927.6C875.7 934.2 872.0 939.0 868.0 940.8C864.0 942.6 859.2 940.4 854.8 938.6C850.4 936.8 843.8 931.3 841.6 929.8M912.0 874.8C914.2 875.9 921.5 878.1 925.2 881.4C928.9 884.7 931.8 889.8 934.0 894.6C936.2 899.4 938.4 904.5 938.4 910.0C938.4 915.5 936.2 923.9 934.0 927.6C931.8 931.3 926.7 931.3 925.2 932.0M641.4 874.8C644.3 875.2 653.5 875.5 659.0 877.0C664.5 878.5 670.4 881.4 674.4 883.6C678.4 885.8 681.7 889.1 683.2 890.2M670.0 872.6C670.0 875.2 668.5 884.0 670.0 888.0C671.5 892.0 675.1 893.5 678.8 896.8C682.5 900.1 688.3 906.1 692.0 907.8C695.7 909.4 702.3 905.6 700.8 906.7C699.3 907.8 689.1 912.8 683.2 914.4C677.3 916.0 669.3 918.8 665.6 916.6C661.9 914.4 664.1 903.4 661.2 901.2C658.3 899.0 652.4 901.6 648.0 903.4C643.6 905.2 637.0 910.7 634.8 912.2M674.4 907.8C678.1 909.6 689.8 915.1 696.4 918.8C703.0 922.5 709.2 924.8 714.0 929.8C718.8 934.8 723.2 945.4 725.0 948.5M716.2 901.2C718.8 902.7 726.5 907.4 731.6 910.0C736.7 912.6 744.4 915.5 747.0 916.6M755.8 892.4C755.6 895.3 753.6 904.1 754.7 910.0C755.8 915.9 759.1 923.2 762.4 927.6C765.7 932.0 773.8 933.1 774.5 936.4C775.2 939.7 770.3 944.8 766.8 947.4C763.3 950.0 758.0 952.2 753.6 951.8C749.2 951.4 744.1 947.8 740.4 945.2C736.7 942.6 733.1 937.9 731.6 936.4M821.8 903.4C824.0 906.7 832.1 918.4 835.0 923.2C837.9 928.0 838.7 930.5 839.4 932.0M727.2 978.2L736.0 976.0"/>
<path stroke="#c8442c" stroke-width="1.8" opacity="0.58" d="M854.8 822.0C855.2 819.8 854.8 813.2 857.0 808.8C859.2 804.4 864.0 799.6 868.0 795.6C872.0 791.6 879.0 786.4 881.2 784.6M942.8 894.6C945.7 894.8 955.1 894.4 960.4 895.7C965.7 897.0 972.3 901.2 974.7 902.3M876.8 690.0C877.2 692.6 876.8 701.7 879.0 705.4C881.2 709.1 888.2 710.9 890.0 712.0M912.0 725.2C913.8 725.6 919.3 730.3 923.0 727.4C926.7 724.5 931.4 713.8 934.0 707.6C936.6 701.4 937.7 692.9 938.4 690.0"/>
<path stroke="#c8442c" stroke-width="1.5" opacity="0.3" d="M894.4 877.0C896.6 880.7 903.6 891.7 907.6 899.0C911.6 906.3 916.2 915.5 918.6 921.0C921.0 926.5 921.4 930.2 921.9 932.0M848.2 896.8C850.8 895.0 857.4 888.7 863.6 885.8C869.8 882.9 879.0 880.7 885.6 879.2C892.2 877.7 900.3 877.4 903.2 877.0M912.0 866.0C914.9 867.8 925.2 871.5 929.6 877.0C934.0 882.5 937.3 891.7 938.4 899.0C939.5 906.3 936.6 917.3 936.2 921.0M639.2 901.2C641.8 900.1 649.5 895.9 654.6 894.6C659.7 893.3 667.4 893.7 670.0 893.5M630.4 923.2C632.6 921.0 638.5 913.3 643.6 910.0C648.7 906.7 658.3 904.5 661.2 903.4M692.0 921.0C694.9 922.1 705.2 924.7 709.6 927.6C714.0 930.5 716.9 936.8 718.4 938.6M799.8 692.2C803.8 696.6 812.6 706.1 824.0 718.6C835.4 731.1 860.7 758.9 868.0 767.0"/>
<path stroke="#c8442c" stroke-width="1.3" opacity="0.15" d="M920.8 813.2C924.8 815.0 936.6 820.9 945.0 824.2C953.4 827.5 967.0 831.5 971.4 833.0"/>
<path stroke="#c8442c" stroke-width="2.2" opacity="0.88" d="M843.0 934.0C844.5 937.3 849.7 946.3 852.0 954.0C854.3 961.7 856.5 970.7 857.0 980.0C857.5 989.3 856.8 1000.0 855.0 1010.0C853.2 1020.0 850.2 1030.7 846.0 1040.0C841.8 1049.3 836.7 1057.7 830.0 1066.0C823.3 1074.3 814.7 1082.5 806.0 1090.0C797.3 1097.5 783.0 1107.3 778.0 1111.0C773.0 1114.7 780.3 1109.9 776.0 1112.4C771.7 1114.9 760.0 1122.1 752.0 1126.0C744.0 1129.9 735.3 1133.8 728.0 1136.0C720.7 1138.2 713.7 1139.3 708.0 1139.0C702.3 1138.7 697.5 1136.8 694.0 1134.0C690.5 1131.2 688.0 1126.7 687.0 1122.0C686.0 1117.3 687.8 1108.7 688.0 1106.0M738.0 978.0C736.7 977.8 733.0 975.7 730.0 977.0C727.0 978.3 724.3 980.8 720.0 986.0C715.7 991.2 710.0 999.3 704.0 1008.0C698.0 1016.7 690.3 1028.3 684.0 1038.0C677.7 1047.7 670.7 1058.7 666.0 1066.0C661.3 1073.3 658.0 1078.5 656.0 1082.0C654.0 1085.5 654.3 1086.2 654.0 1087.0M654.0 1087.0C655.0 1085.2 657.3 1078.2 660.0 1076.0C662.7 1073.8 666.7 1073.0 670.0 1074.0C673.3 1075.0 677.3 1078.7 680.0 1082.0C682.7 1085.3 684.8 1090.3 686.0 1094.0C687.2 1097.7 686.8 1102.3 687.0 1104.0M738.0 978.0C737.7 979.3 738.3 980.7 736.0 986.0C733.7 991.3 728.0 1001.0 724.0 1010.0C720.0 1019.0 715.2 1030.7 712.0 1040.0C708.8 1049.3 706.5 1058.3 705.0 1066.0C703.5 1073.7 702.3 1081.5 703.0 1086.0C703.7 1090.5 706.5 1091.3 709.0 1093.0C711.5 1094.7 717.5 1094.8 718.0 1096.0C718.5 1097.2 713.7 1098.5 712.0 1100.0C710.3 1101.5 708.7 1104.2 708.0 1105.0M932.0 933.0C932.7 935.8 935.7 942.2 936.0 950.0C936.3 957.8 935.7 969.3 934.0 980.0C932.3 990.7 929.7 1003.0 926.0 1014.0C922.3 1025.0 917.0 1036.7 912.0 1046.0C907.0 1055.3 900.7 1063.7 896.0 1070.0C891.3 1076.3 887.3 1080.7 884.0 1084.0C880.7 1087.3 877.3 1089.0 876.0 1090.0"/>
<path stroke="#c8442c" stroke-width="1.5" opacity="0.3" d="M922.0 934.0C922.5 938.3 925.0 950.7 925.0 960.0C925.0 969.3 923.8 980.0 922.0 990.0C920.2 1000.0 917.7 1009.3 914.0 1020.0C910.3 1030.7 905.7 1043.3 900.0 1054.0C894.3 1064.7 883.3 1079.0 880.0 1084.0M671.0 1132.0C671.2 1129.7 670.2 1122.2 672.0 1118.0C673.8 1113.8 680.3 1108.8 682.0 1107.0"/>
<path stroke="#c8442c" stroke-width="1.8" opacity="0.58" d="M880.0 1084.0C875.0 1088.3 861.7 1101.3 850.0 1110.0C838.3 1118.7 823.3 1128.7 810.0 1136.0C796.7 1143.3 783.3 1149.3 770.0 1154.0C756.7 1158.7 741.7 1163.0 730.0 1164.0C718.3 1165.0 708.3 1162.7 700.0 1160.0C691.7 1157.3 684.8 1152.7 680.0 1148.0C675.2 1143.3 672.5 1134.7 671.0 1132.0"/>
<path stroke="#c8442c" stroke-width="2.2" opacity="0.88" d="M620.6 686.2C622.2 685.0 626.5 681.1 630.1 679.2C633.7 677.4 638.2 675.8 642.2 674.9C646.2 674.1 650.6 674.0 654.3 674.1C658.1 674.1 662.9 675.2 664.7 675.4M650.0 654.7C650.3 656.5 650.9 661.6 651.7 665.4C652.6 669.2 654.6 675.5 655.2 677.5M593.0 693.9C593.1 697.5 592.8 707.6 593.8 715.5C594.8 723.5 597.4 730.2 599.0 741.5C600.6 752.7 602.6 776.0 603.3 782.9M603.3 782.9C604.8 780.3 609.1 772.6 612.0 767.4C614.9 762.2 619.2 754.4 620.6 751.8M593.0 693.9C594.0 697.0 596.8 707.0 599.0 712.1C601.2 717.1 603.9 721.0 605.9 724.2C607.9 727.3 610.2 729.9 611.1 731.1M623.2 672.3C623.8 674.3 624.6 678.7 626.7 684.4C628.7 690.2 632.1 700.0 635.3 706.9C638.5 713.8 642.2 720.4 645.7 725.9C649.1 731.4 654.3 737.4 656.0 739.7M656.0 739.7C654.9 740.9 651.7 744.6 649.1 746.6C646.5 748.7 641.9 751.0 640.5 751.8M603.3 748.4C604.3 751.5 606.9 762.8 609.4 767.4C611.8 772.0 613.4 774.6 618.0 776.0C622.6 777.5 630.4 776.9 637.0 776.0C643.7 775.1 651.1 772.1 657.8 770.8C664.4 769.5 673.6 768.7 676.8 768.2M637.0 755.3C637.6 758.7 638.9 769.7 640.5 776.0C642.1 782.4 645.1 789.0 646.5 793.3C648.0 797.6 648.7 800.5 649.1 801.9M649.1 755.3C649.4 758.7 650.4 770.0 650.5 776.0C650.7 782.1 650.2 787.2 650.0 791.6C649.8 795.9 649.3 800.2 649.1 801.9M669.0 695.7C668.3 698.4 665.7 706.5 664.7 712.1C663.7 717.7 662.9 723.6 662.9 729.4C662.9 735.1 664.4 743.8 664.7 746.6M669.0 695.7C669.9 699.0 672.6 708.5 674.2 715.5C675.8 722.6 677.9 731.4 678.5 738.0C679.1 744.6 679.1 752.3 677.6 755.3C676.2 758.3 671.2 756.0 669.9 756.1M687.1 715.5C686.0 716.0 682.2 716.4 680.2 718.1C678.2 719.9 676.1 722.0 675.0 725.9C674.0 729.8 673.9 736.0 674.2 741.5C674.5 746.9 675.5 753.5 676.8 758.7C678.1 763.9 681.1 770.3 682.0 772.6M679.4 772.6C681.0 774.3 685.4 780.2 688.9 782.9C692.3 785.7 699.2 789.6 700.1 789.0C701.0 788.4 696.8 782.1 694.1 779.5C691.3 776.9 685.4 774.4 683.7 773.4M683.7 654.2C683.1 656.9 680.5 665.0 680.2 670.6C679.9 676.2 681.4 683.6 682.0 687.9C682.5 692.2 683.4 695.1 683.7 696.5M683.7 654.2C684.8 658.1 688.0 670.7 690.6 677.5C693.2 684.3 697.5 691.3 699.2 694.8C701.0 698.2 702.1 697.7 701.0 698.2C699.8 698.8 693.8 698.2 692.3 698.2M709.6 670.6C709.9 669.4 711.5 667.7 711.3 663.7C711.2 659.7 709.5 651.6 708.7 646.4C708.0 641.2 707.3 634.9 707.0 632.6M736.4 642.9C736.1 646.4 735.1 656.5 734.7 663.7C734.2 670.9 731.9 683.6 733.8 686.2C735.7 688.7 744.5 683.6 745.9 679.2C747.3 674.9 744.0 666.3 742.4 660.2C740.9 654.2 737.4 645.8 736.4 642.9M732.1 703.4L732.9 710.3"/>
<path stroke="#c8442c" stroke-width="1.8" opacity="0.58" d="M650.0 654.7C649.1 655.9 646.5 659.3 644.8 662.0C643.1 664.6 640.5 669.2 639.6 670.6M623.2 673.2C621.8 677.4 617.2 690.6 614.6 698.2C612.0 705.9 609.7 712.9 607.6 719.0C605.6 725.0 603.3 731.9 602.5 734.5M616.3 691.3C616.9 695.4 618.3 708.0 619.7 715.5C621.2 723.0 623.2 730.8 624.9 736.3C626.7 741.7 629.3 746.3 630.1 748.4M668.1 756.1C669.1 757.1 672.2 760.0 674.2 762.2C676.2 764.3 679.2 767.9 680.2 769.1M666.4 684.4C668.1 685.9 673.3 689.3 676.8 693.1C680.2 696.8 684.3 703.1 687.1 706.9C690.0 710.6 692.9 714.1 694.1 715.5M730.3 696.5C732.1 695.7 737.4 693.1 740.7 691.3C744.0 689.6 748.6 687.0 750.2 686.2M751.1 686.2C750.4 687.9 747.9 693.6 746.8 696.5C745.6 699.4 744.6 702.3 744.2 703.4M706.2 706.9L706.5 715.5M699.2 732.8C699.5 734.0 699.5 737.1 701.0 739.7C702.4 742.3 705.0 745.8 707.9 748.4C710.8 751.0 714.8 753.5 718.2 755.3C721.7 757.0 725.2 759.0 728.6 758.7C732.1 758.4 735.5 756.1 739.0 753.5C742.4 751.0 746.2 747.2 749.4 743.2C752.5 739.1 755.4 734.0 758.0 729.4C760.6 724.7 763.2 719.9 764.9 715.5C766.6 711.2 767.9 706.6 768.4 703.4C768.8 700.3 767.6 697.7 767.5 696.5M721.7 748.4C722.9 748.1 726.2 746.8 728.6 746.6C731.1 746.5 735.1 747.4 736.4 747.5M758.0 689.6C759.4 687.0 763.2 679.0 766.6 674.1C770.1 669.2 775.0 664.0 778.7 660.2C782.5 656.5 787.4 653.0 789.1 651.6"/>
<path stroke="#c8442c" stroke-width="1.5" opacity="0.3" d="M605.9 712.1C606.6 715.5 608.5 726.5 610.2 732.8C612.0 739.1 615.3 747.2 616.3 750.1M631.8 698.2C633.0 701.1 635.9 709.8 638.8 715.5C641.6 721.3 647.4 729.9 649.1 732.8M669.9 663.7C671.0 666.6 674.2 675.2 676.8 681.0C679.4 686.7 682.8 693.6 685.4 698.2C688.0 702.9 691.2 706.9 692.3 708.6M692.3 703.4C692.9 704.6 694.3 707.8 695.8 710.3C697.2 712.9 700.1 717.5 701.0 719.0M709.6 716.4C711.3 716.0 716.5 714.4 720.0 713.8C723.4 713.2 728.6 713.1 730.3 712.9M707.9 734.5L711.3 737.1M732.1 732.8L733.8 734.9M694.1 724.2C694.6 725.0 696.4 727.6 697.5 729.4C698.7 731.1 700.4 733.7 701.0 734.5M701.0 725.9L709.6 724.2M735.5 721.6L745.9 723.3M763.2 698.2C764.3 695.4 767.2 686.4 770.1 681.0C773.0 675.5 776.1 670.6 780.5 665.4C784.8 660.2 793.4 652.5 796.0 649.9M682.0 646.4C683.7 644.7 688.0 639.2 692.3 636.0C696.6 632.9 702.1 629.4 707.9 627.4C713.6 625.4 720.8 623.7 726.9 623.9C732.9 624.2 739.3 626.0 744.2 629.1C749.1 632.3 753.1 638.3 756.3 642.9C759.4 647.6 762.0 654.5 763.2 656.8M756.3 646.4C757.1 649.9 760.9 659.7 761.5 667.1C762.0 674.6 760.6 683.3 759.7 691.3C758.9 699.4 757.4 708.6 756.3 715.5C755.1 722.4 753.7 727.1 752.8 732.8C751.9 738.6 751.4 747.2 751.1 750.1M745.9 753.5C747.1 753.4 751.7 754.4 752.8 752.7C754.0 751.0 752.8 744.8 752.8 743.2M742.4 611.8C744.2 615.3 749.6 626.2 752.8 632.6C756.0 638.9 760.0 647.0 761.5 649.9M787.4 672.3L801.2 693.1M789.1 686.2C792.6 684.7 802.6 680.7 809.8 677.5C817.0 674.3 825.7 669.7 832.3 667.1C838.9 664.6 846.7 662.8 849.6 662.0"/>
<path stroke="#c8442c" stroke-width="1.3" opacity="0.15" d="M714.8 625.7C715.7 630.6 718.2 645.8 720.0 655.0C721.7 664.3 723.7 674.1 725.2 681.0C726.6 687.9 728.0 693.9 728.6 696.5"/>
<ellipse cx="701.0" cy="716.4" rx="2.4" ry="6.9" transform="rotate(-25 701.0 716.4)" fill="#c8442c" stroke="none"/>
<ellipse cx="741.6" cy="706.9" rx="3.3" ry="8.6" transform="rotate(20 741.6 706.9)" fill="#c8442c" stroke="none"/>
<path stroke="#2ba683" stroke-width="1.8" opacity="0.58" d="M1214.2 465.6C1216.0 463.7 1221.5 456.9 1224.9 453.8C1228.3 450.6 1232.8 447.8 1234.4 446.6M1234.4 446.6C1236.4 447.8 1241.9 450.8 1246.3 453.8C1250.6 456.7 1258.1 462.7 1260.5 464.4M1214.2 465.6C1214.0 468.4 1213.7 476.3 1213.0 482.3C1212.3 488.2 1209.4 498.5 1210.2 501.3C1211.0 504.0 1216.9 495.7 1217.8 498.9C1218.6 502.1 1214.8 515.1 1215.4 520.3C1216.0 525.4 1219.4 529.0 1221.3 529.8C1223.3 530.6 1226.3 525.8 1227.3 525.0M1234.4 445.4C1237.2 448.4 1245.5 457.1 1251.0 463.3C1256.6 469.4 1262.5 475.9 1267.6 482.3C1272.8 488.6 1276.0 496.9 1281.9 501.3C1287.8 505.6 1299.7 507.2 1303.3 508.4M1235.6 501.3C1237.4 499.7 1241.7 494.1 1246.3 491.8C1250.8 489.4 1257.0 487.2 1262.9 487.0C1268.8 486.8 1276.0 488.2 1281.9 490.6C1287.8 492.9 1294.2 496.7 1298.5 501.3C1302.9 505.8 1306.4 515.1 1308.0 517.9M1240.3 507.2C1238.9 508.2 1233.5 510.2 1232.0 513.1C1230.5 516.1 1230.5 521.8 1231.3 525.0C1232.1 528.3 1234.5 531.4 1236.8 532.6C1239.1 533.8 1243.0 533.8 1245.1 532.1C1247.1 530.5 1248.7 526.0 1249.1 522.6C1249.5 519.3 1248.9 514.5 1247.5 511.9C1246.0 509.4 1241.5 508.0 1240.3 507.2M1260.5 510.8C1260.1 512.3 1257.4 516.3 1258.1 520.3C1258.9 524.2 1263.3 529.0 1265.3 534.5C1267.3 540.1 1269.2 550.3 1270.0 553.5M1227.3 525.0C1228.1 527.8 1230.4 536.5 1232.0 541.6C1233.6 546.8 1234.8 551.9 1236.8 555.9C1238.7 559.8 1242.7 563.8 1243.9 565.4M1285.5 529.8C1284.5 531.7 1281.3 537.7 1279.5 541.6C1277.7 545.6 1275.6 551.5 1274.8 553.5M1215.4 563.0C1215.4 566.2 1216.6 575.7 1215.4 582.0C1214.2 588.4 1211.4 595.9 1208.3 601.0C1205.1 606.2 1198.4 610.9 1196.4 612.9M1182.1 615.3L1183.3 622.4M1303.3 508.4C1304.1 515.1 1307.6 534.1 1308.0 548.8C1308.4 563.4 1308.0 581.2 1305.7 596.3C1303.3 611.3 1299.7 625.6 1293.8 639.0C1287.8 652.5 1277.9 664.4 1270.0 677.0C1262.1 689.7 1252.6 701.2 1246.3 715.0C1239.9 728.9 1234.4 752.4 1232.0 759.9M1277.1 572.5C1274.4 576.5 1267.6 586.4 1260.5 596.3C1253.4 606.2 1242.7 620.0 1234.4 631.9C1226.1 643.8 1218.6 654.5 1210.6 667.5C1202.7 680.6 1193.6 694.9 1186.9 710.3C1180.2 725.7 1173.0 751.7 1170.3 759.9M1246.3 612.9C1243.9 616.5 1237.6 626.0 1232.0 634.3C1226.5 642.6 1219.4 652.1 1213.0 662.8C1206.7 673.5 1199.6 685.7 1194.0 698.4C1188.5 711.1 1182.1 732.1 1179.8 738.8M1417.3 730.5C1418.5 731.9 1423.6 736.6 1424.4 738.8C1425.2 741.0 1423.6 743.9 1422.0 743.5C1420.5 743.1 1416.1 737.6 1414.9 736.4M1355.5 732.9C1354.7 734.6 1350.0 739.0 1350.8 743.5C1351.6 748.1 1358.7 757.2 1360.3 759.9M1147.7 681.8C1148.3 683.4 1149.1 687.3 1151.3 691.3C1153.4 695.2 1156.8 701.0 1160.8 705.5C1164.7 710.1 1169.9 715.0 1175.0 718.6C1180.2 722.2 1188.9 725.5 1191.6 726.9"/>
<path stroke="#2ba683" stroke-width="1.5" opacity="0.3" d="M1220.1 464.4C1222.1 463.7 1227.7 460.7 1232.0 459.7C1236.4 458.7 1243.9 458.7 1246.3 458.5M1215.4 468.0C1217.4 471.6 1222.9 482.7 1227.3 489.4C1231.6 496.1 1239.1 505.2 1241.5 508.4M1360.3 525.0C1363.1 526.6 1372.6 531.0 1376.9 534.5C1381.3 538.1 1384.8 544.4 1386.4 546.4M1248.6 487.0C1249.8 485.4 1252.2 479.7 1255.8 477.5C1259.3 475.3 1264.5 473.5 1270.0 473.9C1275.6 474.3 1283.5 476.5 1289.0 479.9C1294.6 483.2 1299.7 489.0 1303.3 494.1C1306.8 499.3 1309.2 508.0 1310.4 510.8M1246.3 565.4L1258.1 572.5M1128.7 579.6C1130.1 576.9 1133.2 568.6 1137.0 563.0C1140.8 557.5 1145.7 550.7 1151.3 546.4C1156.8 542.0 1163.1 539.3 1170.3 536.9C1177.4 534.5 1188.1 532.3 1194.0 532.1C1200.0 531.9 1204.3 534.5 1205.9 535.7C1207.5 536.9 1203.9 538.7 1203.5 539.3M1151.3 710.3C1152.8 714.2 1158.6 725.8 1160.8 734.0C1162.9 742.3 1163.7 755.6 1164.3 759.9"/>
<path stroke="#2ba683" stroke-width="2.2" opacity="0.88" d="M1303.3 507.2C1305.7 508.4 1312.8 512.2 1317.5 514.3C1322.3 516.4 1328.2 519.2 1331.8 519.8C1335.3 520.4 1337.6 518.9 1338.9 517.9C1340.2 516.9 1339.3 514.3 1339.4 513.6M1339.4 513.6C1341.7 514.9 1348.9 518.4 1353.2 521.4C1357.4 524.5 1361.5 528.0 1365.0 532.1C1368.6 536.3 1372.0 541.6 1374.5 546.4C1377.1 551.1 1379.3 556.0 1380.5 560.6C1381.7 565.3 1381.5 572.1 1381.7 574.4M1381.7 574.4C1378.9 572.1 1371.8 566.1 1365.0 560.6C1358.3 555.2 1348.4 546.8 1341.3 541.6C1334.2 536.5 1327.6 532.7 1322.3 529.8C1316.9 526.8 1311.4 524.8 1309.2 523.8M1262.9 509.6C1263.7 508.8 1265.3 505.0 1267.6 504.8C1270.0 504.6 1274.8 505.8 1277.1 508.4C1279.5 511.0 1280.7 515.9 1281.9 520.3C1283.1 524.6 1285.1 529.8 1284.3 534.5C1283.5 539.3 1278.7 544.0 1277.1 548.8C1275.6 553.5 1274.6 557.5 1274.8 563.0C1275.0 568.6 1276.4 576.1 1278.3 582.0C1280.3 588.0 1284.7 594.9 1286.7 598.6C1288.6 602.4 1289.6 603.6 1290.2 604.6M1235.6 541.6C1237.0 542.0 1241.3 544.2 1243.9 544.0C1246.5 543.8 1249.0 540.3 1251.0 540.5C1253.0 540.6 1255.0 544.4 1255.8 545.2M1220.1 558.3C1222.1 559.7 1227.7 565.4 1232.0 566.6C1236.4 567.8 1242.3 566.8 1246.3 565.4C1250.2 564.0 1253.4 561.8 1255.8 558.3C1258.1 554.7 1259.9 549.6 1260.5 544.0C1261.1 538.5 1259.7 530.2 1259.3 525.0C1258.9 519.9 1258.3 515.1 1258.1 513.1M1220.1 563.0C1222.9 566.2 1230.8 576.1 1236.8 582.0C1242.7 588.0 1249.8 594.5 1255.8 598.6C1261.7 602.8 1267.3 605.8 1272.4 607.0C1277.5 608.1 1283.5 606.2 1286.7 605.8C1289.8 605.4 1290.6 604.8 1291.4 604.6M1205.9 532.1C1204.3 531.9 1201.5 530.4 1196.4 531.0C1191.2 531.5 1181.7 533.1 1175.0 535.7C1168.3 538.3 1161.6 541.4 1156.0 546.4C1150.5 551.3 1145.5 557.9 1141.8 565.4C1138.0 572.9 1135.0 582.8 1133.4 591.5C1131.9 600.2 1131.7 610.1 1132.3 617.6C1132.9 625.2 1136.2 633.5 1137.0 636.7M1164.3 558.3C1162.5 560.2 1157.0 565.0 1153.6 570.1C1150.3 575.3 1146.9 582.8 1144.1 589.1C1141.4 595.5 1138.6 601.8 1137.0 608.1C1135.4 614.5 1135.0 624.0 1134.6 627.1M1207.1 544.0C1207.7 546.4 1209.7 553.1 1210.6 558.3C1211.6 563.4 1213.8 568.6 1213.0 574.9C1212.2 581.2 1209.1 590.3 1205.9 596.3C1202.7 602.2 1198.0 607.4 1194.0 610.5C1190.1 613.7 1184.1 614.5 1182.1 615.3M1182.1 615.3C1185.7 614.1 1196.8 609.7 1203.5 608.1C1210.2 606.6 1217.0 605.8 1222.5 605.8C1228.1 605.8 1232.8 607.0 1236.8 608.1C1240.7 609.3 1244.7 612.1 1246.3 612.9M1096.6 629.5C1099.0 628.9 1104.9 626.4 1110.9 626.0C1116.8 625.6 1126.7 625.0 1132.3 627.1C1137.8 629.3 1144.9 636.3 1144.1 639.0C1143.3 641.8 1133.0 643.6 1127.5 643.8C1122.0 644.0 1116.0 642.6 1110.9 640.2C1105.7 637.8 1099.0 631.3 1096.6 629.5M1137.0 636.7C1140.2 638.0 1149.7 642.4 1156.0 645.0C1162.3 647.5 1169.1 649.5 1175.0 652.1C1181.0 654.7 1186.9 657.4 1191.6 660.4C1196.4 663.4 1200.3 666.7 1203.5 669.9C1206.7 673.1 1209.1 676.6 1210.6 679.4C1212.2 682.2 1212.6 685.3 1213.0 686.5M1138.2 660.4C1140.0 659.0 1145.1 653.9 1148.9 652.1C1152.6 650.3 1157.6 649.7 1160.8 649.7C1163.9 649.7 1169.1 650.7 1167.9 652.1C1166.7 653.5 1158.0 656.4 1153.6 658.0C1149.3 659.6 1144.3 661.2 1141.8 661.6C1139.2 662.0 1138.8 660.6 1138.2 660.4M1309.2 523.8C1312.2 529.6 1321.7 546.2 1327.0 558.3C1332.4 570.3 1337.3 582.8 1341.3 596.3C1345.2 609.7 1349.0 625.2 1350.8 639.0C1352.6 652.9 1353.6 667.5 1352.0 679.4C1350.4 691.3 1345.4 700.8 1341.3 710.3C1337.1 719.8 1329.4 732.1 1327.0 736.4M1355.5 640.2C1358.3 643.6 1366.6 653.5 1372.2 660.4C1377.7 667.3 1384.4 676.2 1388.8 681.8C1393.1 687.3 1395.9 689.7 1398.3 693.7C1400.7 697.6 1402.2 703.6 1403.0 705.5M1397.1 687.7C1399.7 689.9 1408.4 696.2 1412.5 700.8C1416.7 705.3 1420.3 711.5 1422.0 715.0C1423.8 718.6 1424.8 721.8 1423.2 722.2C1421.6 722.6 1415.5 719.4 1412.5 717.4C1409.6 715.4 1406.6 711.5 1405.4 710.3M1403.0 705.5C1403.8 708.3 1406.4 716.6 1407.8 722.2C1409.2 727.7 1410.4 732.5 1411.4 738.8C1412.3 745.1 1413.3 756.4 1413.7 759.9M1365.0 734.0C1367.4 733.0 1374.9 730.7 1379.3 728.1C1383.6 725.5 1389.2 720.2 1391.2 718.6M1391.2 718.6C1392.7 721.6 1397.1 729.5 1400.7 736.4C1404.2 743.3 1410.6 756.0 1412.5 759.9M1284.3 759.9C1287.8 758.0 1297.7 752.0 1305.7 748.3C1313.6 744.6 1323.5 740.2 1331.8 737.6C1340.1 735.0 1351.6 733.6 1355.5 732.9"/>
<path stroke="#2ba683" stroke-width="3.0" opacity="0.95" d="M1175.0 668.7C1176.2 667.6 1179.6 663.7 1182.1 662.3C1184.7 660.9 1189.1 660.7 1190.5 660.4"/>
<ellipse cx="1238.0" cy="514.3" rx="3.1" ry="4.8" transform="rotate(-10 1238.0 514.3)" fill="#2ba683" stroke="none"/>
<path stroke="#2ba683" stroke-width="2.2" opacity="0.88" d="M1147.2 681.9C1148.1 686.7 1150.9 701.8 1152.5 710.7C1154.1 719.6 1156.4 727.2 1156.9 735.5C1157.3 743.8 1157.4 752.5 1155.0 760.3C1152.6 768.0 1147.8 775.3 1142.6 782.0C1137.4 788.7 1130.7 794.9 1124.0 800.6C1117.3 806.3 1107.7 812.5 1102.3 816.1C1096.9 819.7 1093.3 821.3 1091.5 822.3M1093.0 802.1C1087.8 805.5 1072.3 815.3 1062.0 822.3C1051.7 829.3 1039.3 837.3 1031.0 844.0C1022.7 850.7 1015.8 858.5 1012.4 862.6C1009.0 866.7 1010.3 867.8 1010.9 868.8C1011.4 869.8 1014.7 868.8 1015.5 868.8M1015.5 856.4C1019.1 854.9 1029.5 848.9 1037.2 847.1C1045.0 845.3 1055.8 845.5 1062.0 845.5C1068.2 845.5 1072.3 846.8 1074.4 847.1M1074.4 848.6C1079.1 848.1 1093.0 845.5 1102.3 845.5C1111.6 845.5 1121.4 846.8 1130.2 848.6C1139.0 850.5 1150.9 855.1 1155.0 856.4M1173.6 822.3C1172.0 824.9 1166.9 832.6 1164.3 837.8C1161.7 843.0 1158.6 848.9 1158.1 853.3C1157.6 857.7 1159.4 862.6 1161.2 864.1C1163.0 865.7 1167.7 862.9 1169.0 862.6M1229.4 760.3C1229.1 762.9 1227.3 770.1 1227.8 775.8C1228.4 781.5 1229.1 789.2 1232.5 794.4C1235.9 799.6 1241.3 803.4 1248.0 806.8C1254.7 810.2 1263.5 813.0 1272.8 814.5C1282.1 816.1 1293.5 816.6 1303.8 816.1C1314.1 815.6 1324.5 813.5 1334.8 811.5C1345.1 809.4 1360.6 805.0 1365.8 803.7M1244.9 782.0C1250.6 778.9 1267.1 769.6 1279.0 763.4C1290.9 757.2 1305.9 749.4 1316.2 744.8C1326.5 740.1 1334.8 737.3 1341.0 735.5C1347.2 733.7 1351.9 732.9 1353.4 734.0C1355.0 735.0 1350.8 740.4 1350.3 741.7M1313.1 772.7C1312.6 775.3 1309.5 783.8 1310.0 788.2C1310.5 792.6 1312.1 796.7 1316.2 799.0C1320.3 801.4 1326.5 802.9 1334.8 802.1C1343.1 801.4 1360.6 795.7 1365.8 794.4M1353.4 760.3C1355.0 762.4 1360.6 767.5 1362.7 772.7C1364.8 777.9 1366.1 783.5 1365.8 791.3C1365.5 799.0 1363.7 810.4 1361.2 819.2C1358.6 828.0 1353.4 837.3 1350.3 844.0C1347.2 850.7 1343.8 856.9 1342.5 859.5M1350.3 833.1C1347.7 835.0 1340.5 839.6 1334.8 844.0C1329.1 848.4 1319.3 856.9 1316.2 859.5M1316.2 859.5C1322.9 859.0 1342.0 857.2 1356.5 856.4C1371.0 855.6 1388.5 854.6 1403.0 854.9C1417.5 855.1 1436.6 857.4 1443.3 858.0M1412.3 760.3C1412.8 761.3 1413.3 760.3 1415.4 766.5C1417.5 772.7 1422.1 787.2 1424.7 797.5C1427.3 807.8 1429.4 818.7 1430.9 828.5C1432.5 838.3 1432.5 850.2 1434.0 856.4C1435.5 862.6 1439.2 864.2 1440.2 865.7M1365.8 794.4C1371.0 792.9 1385.4 787.7 1396.8 785.1C1408.2 782.5 1422.6 779.7 1434.0 778.9C1445.4 778.1 1454.7 778.6 1465.0 780.5C1475.3 782.3 1486.7 785.9 1496.0 789.8C1505.3 793.6 1513.0 797.8 1520.8 803.7C1528.5 809.6 1536.3 818.2 1542.5 825.4C1548.7 832.6 1554.6 840.9 1558.0 847.1C1561.4 853.3 1561.9 860.0 1562.7 862.6M1446.4 809.9C1448.0 813.0 1451.6 822.3 1455.7 828.5C1459.8 834.7 1464.5 844.0 1471.2 847.1C1477.9 850.2 1486.7 847.4 1496.0 847.1C1505.3 846.8 1518.2 845.0 1527.0 845.5C1535.8 846.1 1543.5 848.4 1548.7 850.2C1553.9 852.0 1556.5 855.4 1558.0 856.4"/>
<path stroke="#2ba683" stroke-width="1.5" opacity="0.3" d="M1143.2 683.4C1144.2 687.4 1145.8 698.4 1148.8 707.6C1151.8 716.8 1158.7 729.8 1161.2 738.6C1163.7 747.4 1163.3 756.7 1163.7 760.3M1031.0 859.5C1036.2 857.4 1051.7 852.8 1062.0 847.1C1072.3 841.4 1082.7 832.6 1093.0 825.4C1103.3 818.2 1114.7 811.5 1124.0 803.7C1133.3 796.0 1144.7 783.0 1148.8 778.9M1158.1 834.7L1155.0 856.4M1181.3 760.3L1181.3 782.0M1430.9 778.9C1435.6 777.6 1449.0 773.0 1458.8 771.1C1468.6 769.3 1484.6 768.6 1489.8 768.0M1365.8 800.6C1372.0 799.6 1389.0 796.2 1403.0 794.4C1417.0 792.6 1434.0 789.2 1449.5 789.8C1465.0 790.3 1483.1 793.6 1496.0 797.5C1508.9 801.4 1517.7 806.8 1527.0 813.0C1536.3 819.2 1545.6 827.5 1551.8 834.7C1558.0 841.9 1562.7 849.2 1564.2 856.4C1565.8 863.6 1561.6 874.5 1561.1 878.1M1465.0 791.3C1470.2 791.3 1484.6 789.2 1496.0 791.3C1507.4 793.4 1522.9 797.5 1533.2 803.7C1543.5 809.9 1551.3 820.2 1558.0 828.5C1564.7 836.8 1570.9 849.2 1573.5 853.3M1483.6 840.9C1484.1 836.8 1483.6 822.8 1486.7 816.1C1489.8 809.4 1499.6 803.2 1502.2 800.6M1496.0 840.9L1502.2 813.0M1514.6 837.8L1520.8 819.2M1328.6 816.1C1335.8 814.5 1357.0 809.9 1372.0 806.8C1387.0 803.7 1405.6 799.0 1418.5 797.5C1431.4 796.0 1444.3 797.5 1449.5 797.5M1415.4 809.9C1415.9 812.0 1415.9 818.7 1418.5 822.3C1421.1 825.9 1426.8 830.3 1430.9 831.6C1435.0 832.9 1441.2 830.3 1443.3 830.0M1031.0 864.1C1051.7 864.3 1108.5 865.1 1155.0 865.1C1201.5 865.0 1284.2 864.0 1310.0 863.8"/>
<path stroke="#2ba683" stroke-width="1.8" opacity="0.58" d="M1089.9 805.2L1093.0 816.1M1046.5 858.0C1050.1 855.6 1062.0 848.9 1068.2 844.0C1074.4 839.1 1081.4 832.6 1083.7 828.5C1086.0 824.4 1082.4 820.8 1082.2 819.2M1171.1 738.6C1170.8 742.2 1169.3 753.1 1169.0 760.3C1168.6 767.5 1168.2 774.2 1169.0 782.0C1169.7 789.8 1170.8 798.5 1173.6 806.8C1176.4 815.1 1180.8 824.4 1186.0 831.6C1191.2 838.8 1197.4 845.8 1204.6 850.2C1211.8 854.6 1219.6 856.9 1229.4 858.0C1239.2 859.0 1252.1 858.2 1263.5 856.4C1274.9 854.6 1286.8 850.2 1297.6 847.1C1308.4 844.0 1319.8 840.1 1328.6 837.8C1337.4 835.5 1346.7 833.9 1350.3 833.1M1207.7 738.6C1209.2 742.2 1213.6 754.1 1217.0 760.3C1220.4 766.5 1226.0 773.2 1227.8 775.8M1353.4 734.0C1352.4 736.3 1351.3 743.0 1347.2 747.9C1343.1 752.8 1334.8 758.8 1328.6 763.4C1322.4 768.0 1315.7 771.1 1310.0 775.8C1304.3 780.4 1297.6 786.6 1294.5 791.3C1291.4 795.9 1290.9 800.1 1291.4 803.7C1291.9 807.3 1296.6 811.5 1297.6 813.0M1350.3 834.7C1356.5 832.1 1376.1 823.3 1387.5 819.2C1398.9 815.1 1409.2 812.0 1418.5 809.9C1427.8 807.8 1439.2 807.3 1443.3 806.8"/>
<path stroke="#2ba683" stroke-width="3.0" opacity="0.95" d="M1319.3 861.0C1328.1 860.9 1351.8 859.6 1372.0 860.1C1392.2 860.6 1428.8 863.5 1440.2 864.1"/>
<path stroke="#2ba683" stroke-width="1.3" opacity="0.15" d="M1000.0 861.0C1025.8 861.6 1103.3 863.8 1155.0 864.1C1206.7 864.5 1258.3 863.0 1310.0 863.2C1361.7 863.5 1415.4 864.4 1465.0 865.7C1514.6 867.0 1583.8 870.1 1607.6 871.0"/>
<path stroke="#7fd0bd" stroke-width="1.8" opacity="0.58" d="M1764.0 939.0L1790.0 941.0"/>
<path stroke="#b246ba" stroke-width="1.8" opacity="0.58" d="M1406.2 1025.4C1402.4 1028.7 1389.9 1036.9 1383.2 1045.5C1376.5 1054.2 1370.0 1064.7 1365.9 1077.2C1361.8 1089.7 1359.2 1106.0 1358.7 1120.4C1358.2 1134.8 1359.9 1149.2 1363.0 1163.6C1366.2 1178.0 1370.7 1193.9 1377.4 1206.8C1384.2 1219.8 1392.8 1231.8 1403.4 1241.4C1413.9 1251.0 1427.4 1258.7 1440.8 1264.5C1454.3 1270.2 1469.6 1274.1 1484.0 1276.0C1498.4 1277.9 1512.8 1277.4 1527.2 1276.0C1541.6 1274.5 1556.0 1272.1 1570.4 1267.3C1584.8 1262.5 1600.7 1255.3 1613.6 1247.2C1626.6 1239.0 1638.6 1229.4 1648.2 1218.4C1657.8 1207.3 1665.2 1193.9 1671.2 1180.9C1677.2 1168.0 1681.6 1154.5 1684.2 1140.6C1686.8 1126.7 1687.8 1111.3 1687.1 1097.4C1686.4 1083.5 1683.5 1070.0 1679.9 1057.1C1676.3 1044.1 1671.7 1031.1 1665.5 1019.6C1659.2 1008.1 1651.1 996.6 1642.4 987.9C1633.8 979.3 1623.2 972.8 1613.6 967.8C1604.0 962.7 1589.6 959.4 1584.8 957.7M1619.4 1227.0C1624.7 1222.2 1642.4 1208.8 1651.1 1198.2C1659.7 1187.6 1666.0 1176.6 1671.2 1163.6C1676.5 1150.7 1680.8 1134.8 1682.8 1120.4C1684.7 1106.0 1684.4 1089.7 1682.8 1077.2C1681.1 1064.7 1674.4 1050.8 1672.7 1045.5M1563.2 953.4C1564.7 951.4 1569.2 944.8 1571.9 941.8C1574.5 938.9 1577.4 934.6 1579.1 935.5C1580.8 936.5 1581.1 943.2 1582.0 947.6C1582.8 952.0 1583.9 959.6 1584.3 962.0M1600.7 966.3C1602.4 965.6 1608.8 961.3 1610.8 962.0C1612.7 962.7 1612.0 969.2 1612.2 970.7M1445.1 999.5C1444.9 1002.3 1443.7 1012.9 1443.7 1016.7C1443.7 1020.6 1444.9 1021.5 1445.1 1022.5M1527.2 1013.9C1527.7 1017.2 1530.6 1027.8 1530.1 1034.0C1529.6 1040.3 1525.3 1048.4 1524.3 1051.3M1567.6 1071.5C1565.6 1074.8 1558.4 1085.4 1556.0 1091.6C1553.6 1097.9 1553.6 1106.0 1553.1 1108.9M1615.1 1137.7C1613.4 1139.6 1607.6 1144.9 1605.0 1149.2C1602.4 1153.6 1600.7 1158.8 1599.2 1163.6C1597.8 1168.4 1596.8 1175.6 1596.4 1178.0M1509.9 1080.1C1511.9 1079.1 1517.6 1075.3 1521.5 1074.3C1525.3 1073.4 1529.6 1073.4 1533.0 1074.3C1536.3 1075.3 1540.2 1079.1 1541.6 1080.1M1509.9 1126.2C1512.3 1125.7 1520.0 1121.9 1524.3 1123.3C1528.7 1124.8 1531.1 1129.6 1535.9 1134.8C1540.7 1140.1 1548.3 1148.8 1553.1 1155.0C1558.0 1161.2 1561.8 1166.5 1564.7 1172.3C1567.6 1178.0 1569.5 1186.7 1570.4 1189.6M1458.1 1117.6C1460.0 1118.0 1465.8 1118.5 1469.6 1120.4C1473.5 1122.4 1479.2 1127.6 1481.1 1129.1M1453.8 1134.8C1455.9 1135.1 1462.2 1134.4 1466.7 1136.3C1471.3 1138.2 1478.7 1144.7 1481.1 1146.4M1471.1 1143.5L1484.0 1146.4M1475.4 1107.5C1477.3 1108.7 1483.5 1112.0 1486.9 1114.7C1490.3 1117.3 1494.1 1121.9 1495.5 1123.3M1489.8 1165.1L1501.3 1169.4M1507.1 1180.9C1509.0 1181.4 1514.7 1184.0 1518.6 1183.8C1522.4 1183.6 1528.2 1180.2 1530.1 1179.5M1511.4 1106.0C1513.1 1106.0 1518.3 1105.1 1521.5 1106.0C1524.6 1107.0 1528.7 1110.8 1530.1 1111.8M1527.2 1091.6C1529.6 1093.5 1537.1 1098.8 1541.6 1103.1C1546.2 1107.5 1552.4 1115.2 1554.6 1117.6M1406.2 1025.4C1405.3 1028.7 1401.9 1038.3 1400.5 1045.5C1399.0 1052.7 1397.6 1060.9 1397.6 1068.6C1397.6 1076.3 1400.0 1087.8 1400.5 1091.6"/>
<path stroke="#b246ba" stroke-width="2.2" opacity="0.88" d="M1377.4 1077.2C1376.2 1082.5 1371.2 1097.9 1370.2 1108.9C1369.3 1120.0 1369.0 1132.0 1371.7 1143.5C1374.3 1155.0 1379.4 1168.0 1386.1 1178.0C1392.8 1188.1 1401.4 1195.8 1412.0 1204.0C1422.6 1212.1 1436.5 1220.3 1449.5 1227.0C1462.4 1233.7 1475.4 1240.2 1489.8 1244.3C1504.2 1248.4 1521.0 1251.3 1535.9 1251.5C1550.7 1251.7 1565.2 1249.8 1579.1 1245.7C1593.0 1241.6 1612.7 1230.1 1619.4 1227.0M1461.0 973.5C1464.8 971.4 1475.4 963.9 1484.0 960.6C1492.7 957.2 1503.2 954.5 1512.8 953.4C1522.4 952.3 1532.0 953.0 1541.6 953.9C1551.2 954.9 1560.8 956.3 1570.4 959.1C1580.0 961.9 1589.6 965.4 1599.2 970.7C1608.8 975.9 1619.4 983.6 1628.0 990.8C1636.7 998.0 1646.3 1008.6 1651.1 1013.9C1655.9 1019.1 1655.9 1021.1 1656.8 1022.5M1443.7 918.8C1441.3 923.6 1433.9 937.5 1429.3 947.6C1424.7 957.7 1419.2 970.7 1416.3 979.3C1413.5 987.9 1412.3 994.4 1412.0 999.5C1411.8 1004.5 1413.2 1008.8 1414.9 1009.5C1416.6 1010.3 1419.2 1004.5 1422.1 1003.8C1425.0 1003.1 1429.1 1003.5 1432.2 1005.2C1435.3 1006.9 1438.7 1011.0 1440.8 1013.9C1443.0 1016.7 1444.4 1021.1 1445.1 1022.5M1478.3 909.6C1481.1 911.1 1490.3 914.4 1495.5 918.8C1500.8 923.2 1505.6 929.4 1509.9 936.1C1514.3 942.8 1518.3 951.2 1521.5 959.1C1524.6 967.1 1527.5 979.5 1528.7 983.6M1445.1 1022.5C1446.8 1026.3 1452.8 1037.9 1455.2 1045.5C1457.6 1053.2 1457.6 1062.3 1459.5 1068.6C1461.5 1074.8 1463.1 1078.9 1466.7 1083.0C1470.3 1087.1 1476.3 1091.1 1481.1 1093.1C1485.9 1095.0 1491.7 1095.2 1495.5 1094.5C1499.4 1093.8 1502.7 1089.7 1504.2 1088.7M1521.5 987.9C1520.3 989.4 1516.4 992.3 1514.3 996.6C1512.1 1000.9 1509.5 1011.0 1508.5 1013.9M1514.3 1022.5C1513.5 1025.4 1511.1 1033.5 1509.9 1039.8C1508.7 1046.0 1508.5 1053.7 1507.1 1059.9C1505.6 1066.2 1503.2 1073.4 1501.3 1077.2C1499.4 1081.1 1496.5 1082.0 1495.5 1083.0M1497.0 1032.6L1492.7 1045.5M1485.5 1062.8L1484.0 1074.3M1521.5 1054.2C1519.5 1056.6 1512.8 1062.8 1509.9 1068.6C1507.1 1074.3 1505.1 1085.4 1504.2 1088.7M1524.3 1051.3C1526.3 1053.7 1532.5 1059.9 1535.9 1065.7C1539.2 1071.5 1543.1 1082.5 1544.5 1085.9M1605.0 995.1C1603.6 996.8 1598.3 1001.1 1596.4 1005.2C1594.4 1009.3 1595.4 1015.3 1593.5 1019.6C1591.6 1023.9 1588.7 1027.8 1584.8 1031.1C1581.0 1034.5 1574.3 1035.9 1570.4 1039.8C1566.6 1043.6 1563.0 1049.4 1561.8 1054.2C1560.6 1059.0 1563.0 1066.2 1563.2 1068.6M1605.0 995.1C1607.9 995.6 1617.0 995.4 1622.3 998.0C1627.6 1000.7 1632.4 1005.0 1636.7 1011.0C1641.0 1017.0 1645.6 1026.3 1648.2 1034.0C1650.8 1041.7 1652.5 1049.9 1652.5 1057.1C1652.5 1064.3 1649.9 1071.7 1648.2 1077.2C1646.5 1082.7 1643.4 1088.0 1642.4 1090.2M1567.6 1071.5C1569.5 1070.5 1573.8 1066.7 1579.1 1065.7C1584.4 1064.7 1593.5 1064.3 1599.2 1065.7C1605.0 1067.1 1608.8 1069.5 1613.6 1074.3C1618.4 1079.1 1624.4 1086.8 1628.0 1094.5C1631.6 1102.2 1634.8 1112.8 1635.2 1120.4C1635.7 1128.1 1634.0 1135.1 1630.9 1140.6C1627.8 1146.1 1618.9 1151.4 1616.5 1153.6M1495.5 1100.3C1495.5 1102.7 1494.6 1110.8 1495.5 1114.7C1496.5 1118.5 1500.3 1121.9 1501.3 1123.3M1527.2 1120.4C1529.1 1119.7 1534.4 1116.6 1538.7 1116.1C1543.1 1115.6 1548.3 1115.4 1553.1 1117.6C1558.0 1119.7 1562.8 1123.3 1567.6 1129.1C1572.4 1134.8 1577.6 1144.0 1582.0 1152.1C1586.3 1160.3 1591.3 1171.8 1593.5 1178.0C1595.6 1184.3 1596.4 1186.4 1594.9 1189.6C1593.5 1192.7 1588.9 1195.8 1584.8 1196.8C1580.8 1197.7 1574.8 1197.5 1570.4 1195.3C1566.1 1193.2 1560.8 1185.7 1558.9 1183.8M1484.0 1126.2C1485.9 1125.7 1491.2 1123.1 1495.5 1123.3C1499.9 1123.6 1505.1 1124.3 1509.9 1127.6C1514.7 1131.0 1520.0 1137.5 1524.3 1143.5C1528.7 1149.5 1533.0 1158.4 1535.9 1163.6C1538.7 1168.9 1540.7 1173.2 1541.6 1175.2M1481.1 1129.1C1481.6 1131.5 1481.6 1138.2 1484.0 1143.5C1486.4 1148.8 1491.7 1155.5 1495.5 1160.8C1499.4 1166.0 1503.2 1172.3 1507.1 1175.2C1510.9 1178.0 1514.7 1177.8 1518.6 1178.0C1522.4 1178.3 1528.2 1176.8 1530.1 1176.6M1383.2 1070.0C1381.8 1073.1 1376.5 1082.3 1374.6 1088.7C1372.6 1095.2 1371.2 1103.6 1371.7 1108.9C1372.2 1114.2 1374.6 1119.0 1377.4 1120.4C1380.3 1121.9 1385.4 1120.0 1389.0 1117.6C1392.6 1115.2 1396.6 1109.9 1399.0 1106.0C1401.5 1102.2 1403.1 1096.4 1403.9 1094.5M1420.7 1205.4C1425.5 1205.6 1439.9 1207.1 1449.5 1206.8C1459.1 1206.6 1469.1 1205.9 1478.3 1204.0C1487.4 1202.0 1496.5 1198.7 1504.2 1195.3C1511.9 1192.0 1521.0 1185.7 1524.3 1183.8"/>
<path stroke="#b246ba" stroke-width="1.5" opacity="0.3" d="M1449.5 982.2C1452.8 979.8 1461.0 972.1 1469.6 967.8C1478.3 963.5 1489.8 958.9 1501.3 956.2C1512.8 953.6 1529.6 952.2 1538.7 951.9C1547.9 951.7 1553.1 954.3 1556.0 954.8M1443.7 918.8C1443.5 923.6 1442.0 938.0 1442.3 947.6C1442.5 957.2 1444.4 969.7 1445.1 976.4C1445.9 983.1 1446.3 986.0 1446.6 987.9M1478.3 909.6C1479.2 913.0 1482.8 923.0 1484.0 930.3C1485.2 937.6 1485.9 944.7 1485.5 953.4C1485.0 962.0 1481.9 977.4 1481.1 982.2M1479.7 993.7L1479.7 1011.0M1520.0 944.7C1521.2 942.3 1524.8 934.1 1527.2 930.3C1529.6 926.6 1532.5 921.8 1534.4 922.3C1536.3 922.7 1537.6 927.5 1538.7 933.2C1539.9 938.9 1540.7 952.4 1541.1 956.2M1463.9 1071.5C1465.8 1073.9 1471.1 1083.5 1475.4 1085.9C1479.7 1088.3 1485.0 1087.8 1489.8 1085.9C1494.6 1083.9 1501.8 1076.3 1504.2 1074.3M1466.7 1047.0C1469.6 1047.2 1478.3 1049.1 1484.0 1048.4C1489.8 1047.7 1498.4 1043.6 1501.3 1042.7M1446.6 990.8C1449.5 988.4 1456.7 979.3 1463.9 976.4C1471.1 973.5 1481.6 972.1 1489.8 973.5C1497.9 975.0 1507.3 979.8 1512.8 985.1C1518.3 990.3 1521.9 998.5 1522.9 1005.2C1523.9 1011.9 1519.3 1022.0 1518.6 1025.4M1527.2 1019.6C1529.6 1023.0 1537.5 1031.6 1541.6 1039.8C1545.7 1047.9 1549.5 1059.0 1551.7 1068.6C1553.9 1078.2 1554.8 1089.2 1554.6 1097.4C1554.3 1105.5 1551.0 1114.2 1550.3 1117.6M1570.4 1064.3L1587.7 1070.0M1550.3 1117.6C1552.7 1122.8 1559.9 1139.2 1564.7 1149.2C1569.5 1159.3 1574.8 1170.8 1579.1 1178.0C1583.4 1185.2 1588.7 1190.0 1590.6 1192.4M1554.6 1068.6C1553.9 1074.8 1550.5 1092.6 1550.3 1106.0C1550.0 1119.5 1551.2 1137.2 1553.1 1149.2C1555.1 1161.2 1560.4 1173.2 1561.8 1178.0M1412.0 1206.8C1408.6 1202.5 1397.6 1190.5 1391.8 1180.9C1386.1 1171.3 1380.8 1160.3 1377.4 1149.2C1374.1 1138.2 1372.6 1120.4 1371.7 1114.7M1584.8 1196.8C1589.6 1197.7 1604.0 1202.3 1613.6 1202.5C1623.2 1202.8 1637.6 1198.9 1642.4 1198.2"/>
<path stroke="#b246ba" stroke-width="1.3" opacity="0.15" d="M1656.8 1005.2C1660.2 1011.0 1672.2 1027.8 1677.0 1039.8C1681.8 1051.8 1684.2 1071.0 1685.6 1077.2"/>
</g>
</svg>
<!--ART1-->
<!--ICONS0-->
<svg id="icons" width="2000" height="1389" viewBox="0 0 2000 1389">
<path d="M51.85 50.10L37.85 64.24L51.85 78.10" fill="none" stroke="#cdcdcd" stroke-width="4.2" stroke-linecap="round" stroke-linejoin="round"/>
<path d="M94.34 50.45H128.50" stroke="#de7f0d" stroke-width="3.3" stroke-linecap="round"/>
<path d="M94.34 63.89H128.50" stroke="#de7f0d" stroke-width="2.6" stroke-linecap="round"/>
<path d="M94.34 77.54H128.50" stroke="#de7f0d" stroke-width="3.3" stroke-linecap="round"/>
<rect x="168.8" y="46.8" width="14.2" height="14.2" rx="3.2" fill="#c6c6c6"/>
<rect x="190.0" y="46.8" width="14.2" height="14.2" rx="3.2" fill="#c6c6c6"/>
<rect x="168.8" y="68.0" width="14.2" height="14.2" rx="3.2" fill="#c6c6c6"/>
<rect x="190.0" y="68.0" width="14.2" height="14.2" rx="3.2" fill="#c6c6c6"/>
<circle cx="201.9" cy="42.1" r="12" fill="#de7f0d"/>
<circle cx="261.1" cy="64.45" r="18.85" fill="none" stroke="#de7f0d" stroke-width="2.7"/>
<path d="M254.9 58.35V50.2Q261 47 267.15 50.2V58.35Z" fill="#de7f0d"/>
<path d="M254.9 60.45H267.15L262.3 73.6Q261.2 75.6 260.1 73.6Z" fill="#de7f0d"/>
<circle cx="986.5" cy="20.2" r="4.4" fill="#8d8d8d"/>
<circle cx="1000" cy="20.2" r="4.4" fill="#8d8d8d"/>
<circle cx="1013.5" cy="20.2" r="4.4" fill="#8d8d8d"/>
<path d="M761.00 42.95C760.83 42.60 759.78 42.82 758.90 43.30C758.03 43.78 755.84 45.58 754.00 46.80C752.16 48.03 746.48 51.44 744.20 53.10C741.93 54.76 737.46 58.61 735.80 60.10C734.14 61.59 731.78 63.95 730.90 65.00C730.03 66.05 728.28 67.32 728.80 68.50C729.33 69.68 733.53 74.36 735.10 74.45C736.68 74.54 739.74 70.82 741.40 69.20C743.06 67.58 746.65 63.51 748.40 61.50C750.15 59.49 753.91 55.03 755.40 53.10C756.89 51.18 759.60 47.37 760.30 46.10C761.00 44.83 761.18 43.30 761.00 42.95Z" fill="#c6c6c6"/>
<path d="M728.10 70.95C726.84 70.27 725.71 70.33 724.60 70.74C723.49 71.15 722.24 72.14 721.45 73.40C720.66 74.66 720.54 76.43 719.84 78.30C719.14 80.17 717.72 83.38 717.25 84.60C716.78 85.83 716.40 85.45 717.04 85.65C717.68 85.85 719.49 86.06 721.10 85.79C722.71 85.52 725.07 84.92 726.70 84.04C728.33 83.17 729.91 81.61 730.90 80.54C731.89 79.47 732.44 78.56 732.65 77.60C732.86 76.64 732.92 75.91 732.16 74.80C731.40 73.69 729.36 71.63 728.10 70.95Z" fill="#c6c6c6"/>
<path d="M835.90 44.00C835.68 43.83 834.85 43.83 833.80 44.35C832.75 44.88 829.43 46.76 827.50 48.20C825.58 49.64 820.68 53.98 818.40 55.90C816.13 57.83 811.05 62.03 809.30 63.60C807.55 65.18 804.27 67.19 804.40 68.50C804.53 69.81 808.78 74.06 810.35 74.10C811.93 74.14 815.29 70.51 817.00 68.85C818.71 67.19 822.25 62.86 824.00 60.80C825.75 58.74 829.56 54.28 831.00 52.40C832.44 50.52 834.94 46.80 835.55 45.75C836.16 44.70 836.12 44.18 835.90 44.00Z" fill="#c6c6c6"/>
<path d="M803.00 71.30C801.68 70.74 800.76 70.86 799.85 71.44C798.94 72.02 798.18 73.42 797.54 74.80C796.90 76.18 796.75 78.18 796.00 79.70C795.25 81.22 793.53 83.03 793.06 83.90C792.59 84.78 792.71 84.75 793.20 84.95C793.69 85.15 794.60 85.36 796.00 85.09C797.40 84.82 799.97 84.10 801.60 83.34C803.23 82.58 804.69 81.50 805.80 80.54C806.91 79.58 807.92 78.56 808.25 77.60C808.58 76.64 808.64 75.85 807.76 74.80C806.89 73.75 804.32 71.86 803.00 71.30Z" fill="#c6c6c6"/>
<path d="M796.35 54.85C795.56 55.20 794.15 58.06 793.34 59.40C792.54 60.74 791.78 61.73 791.52 62.90C791.26 64.07 791.35 65.41 791.80 66.40C792.26 67.39 793.32 68.36 794.25 68.85C795.18 69.34 796.35 69.52 797.40 69.34C798.45 69.17 799.79 68.58 800.55 67.80C801.31 67.02 801.89 65.82 801.95 64.65C802.01 63.48 801.54 62.03 800.90 60.80C800.26 59.58 798.86 58.29 798.10 57.30C797.34 56.31 797.14 54.50 796.35 54.85Z" fill="#c6c6c6"/>
<path d="M796.84 67.24C797.17 67.08 798.33 66.69 798.80 66.26C799.27 65.83 799.50 64.92 799.64 64.65" fill="none" stroke="#202020" stroke-width="1.1" stroke-linecap="round"/>
<path d="M871.90 56.25C872.13 55.20 872.60 53.98 874.00 52.40C875.40 50.83 878.20 48.38 880.30 46.80C882.40 45.23 884.73 43.77 886.60 42.95C888.47 42.13 889.98 41.84 891.50 41.90C893.02 41.96 894.30 42.37 895.70 43.30C897.10 44.23 898.56 46.10 899.90 47.50C901.24 48.90 902.88 50.30 903.75 51.70C904.63 53.10 905.03 54.27 905.15 55.90C905.27 57.53 904.98 59.28 904.45 61.50C903.93 63.72 902.93 66.52 902.00 69.20C901.07 71.88 899.78 75.79 898.85 77.60C897.92 79.41 897.39 79.53 896.40 80.05C895.41 80.58 893.89 80.93 892.90 80.75C891.91 80.58 890.86 79.99 890.45 79.00C890.04 78.01 890.22 76.32 890.45 74.80C890.68 73.28 892.26 69.90 891.85 69.90C891.44 69.90 889.46 73.05 888.00 74.80C886.54 76.55 884.73 78.65 883.10 80.40C881.47 82.15 879.60 84.31 878.20 85.30C876.80 86.29 875.81 86.47 874.70 86.35C873.59 86.23 872.13 85.36 871.55 84.60C870.97 83.84 870.79 82.85 871.20 81.80C871.61 80.75 872.72 79.70 874.00 78.30C875.28 76.90 877.85 74.57 878.90 73.40C879.95 72.23 880.53 71.88 880.30 71.30C880.07 70.72 878.14 70.60 877.50 69.90C876.86 69.20 876.45 67.80 876.45 67.10C876.45 66.40 877.73 66.17 877.50 65.70C877.27 65.23 875.58 65.00 875.05 64.30C874.53 63.60 874.29 62.20 874.35 61.50C874.41 60.80 875.69 60.57 875.40 60.10C875.11 59.63 873.18 59.34 872.60 58.70C872.02 58.06 871.67 57.30 871.90 56.25Z" fill="#c6c6c6"/>
<path d="M962.37 49.99Q963.25 48.90 964.65 48.90L980.75 48.90Q986.00 48.90 982.77 53.04L963.97 77.06Q963.11 78.16 961.71 78.16L945.05 78.16Q939.80 78.16 943.08 74.06Z" fill="#c6c6c6"/>
<path d="M951.84 66.54L969.20 66.54L961.22 74.38L944.56 74.38Z" fill="#202020"/>
<path d="M1042.80 48.90C1043.21 48.38 1044.43 46.68 1045.25 45.75C1046.07 44.82 1046.65 43.92 1047.70 43.30C1048.75 42.68 1050.03 41.98 1051.55 42.04C1053.07 42.10 1055.52 42.62 1056.80 43.65C1058.08 44.68 1058.88 46.63 1059.25 48.20C1059.62 49.78 1059.51 51.64 1059.04 53.10C1058.57 54.56 1057.52 55.99 1056.45 56.95C1055.38 57.91 1053.24 58.53 1052.60 58.84Z" fill="#c6c6c6"/>
<path d="M1037.34 51.21L1050.50 64.65" stroke="#c6c6c6" stroke-width="5" stroke-linecap="round"/>
<path d="M1036.64 56.04C1038.68 55.87 1046.34 63.57 1046.44 65.42C1046.54 67.27 1039.26 72.85 1037.62 74.52C1035.98 76.19 1031.26 81.25 1030.06 82.15C1028.86 83.05 1026.58 83.57 1025.65 83.55C1024.72 83.53 1021.45 82.59 1020.75 81.94C1020.05 81.29 1018.72 77.95 1018.65 77.04C1018.58 76.13 1019.32 73.83 1020.05 72.84C1020.79 71.85 1024.34 68.78 1026.00 67.10C1027.66 65.42 1034.60 56.21 1036.64 56.04Z" fill="#c6c6c6"/>
<path d="M1037.76 58.56L1044.62 64.58L1040.28 68.92L1025.58 68.92Z" fill="#202020"/>
<path d="M1021.66 80.19L1017.74 84.04" stroke="#c6c6c6" stroke-width="4.6" stroke-linecap="round"/>
<path d="M1091.45 47.30V43.65H1095.10M1128.89 43.65H1132.54V47.30M1132.54 81.16V84.81H1128.89M1095.10 84.81H1091.45V81.16M1102.16 43.65h6.30M1102.16 84.81h6.30M1091.45 54.36v6.30M1132.54 54.36v6.30M1115.53 43.65h6.30M1115.53 84.81h6.30M1091.45 67.73v6.30M1132.54 67.73v6.30" fill="none" stroke="#c6c6c6" stroke-width="3.15" stroke-linecap="round" stroke-linejoin="round"/>
<path d="M1186.40 38.75L1193.75 54.85L1212.30 56.95L1198.65 69.55L1202.85 88.10L1186.40 78.65L1169.95 88.10L1174.15 69.55L1160.50 56.95L1179.05 54.85Z" fill="#c6c6c6"/>
<ellipse cx="1261.09" cy="52.89" rx="18.8" ry="13.4" transform="rotate(-20 1261.09 52.89)" fill="none" stroke="#de7f0d" stroke-width="3.1"/>
<circle cx="1251.64" cy="65.21" r="3.5" fill="none" stroke="#de7f0d" stroke-width="3.2"/>
<path d="M1252.20 68.85C1252.03 69.38 1251.68 71.04 1251.15 72.00C1250.63 72.96 1249.40 74.16 1249.05 74.59" fill="none" stroke="#de7f0d" stroke-width="3.3" stroke-linecap="round"/>
<path d="M1250.45 64.16C1250.80 64.21 1251.91 64.56 1252.55 64.44C1253.19 64.32 1254.01 63.62 1254.30 63.46" fill="none" stroke="#a85f0c" stroke-width="1" stroke-linecap="round"/>
<circle cx="1249.75" cy="88.10" r="3.05" fill="#de7f0d"/>
<circle cx="1261.09" cy="88.10" r="3.05" fill="#de7f0d"/>
<circle cx="1272.36" cy="88.10" r="3.05" fill="#de7f0d"/>
<ellipse cx="1739" cy="56" rx="2" ry="2.6" transform="rotate(-25 1739 56)" fill="#c6c6c6"/>
<circle cx="1813.5" cy="64.2" r="23.5" fill="#b038b8"/>
<path d="M1869.49 54.85L1887.90 45.19L1906.31 54.85L1887.90 64.51Z" fill="#c6c6c6" stroke="#c6c6c6" stroke-width="3" stroke-linejoin="round"/>
<path d="M1869.49 73.75L1878.45 68.71L1887.90 72.07L1897.35 68.71L1906.31 73.75L1887.90 83.76Z" fill="#c6c6c6" stroke="#c6c6c6" stroke-width="3" stroke-linejoin="round"/>
<rect x="1940.54" y="49.46" width="39.27" height="29.68" rx="4.4" fill="none" stroke="#c6c6c6" stroke-width="3.1"/>
<path d="M1945.44 64.30L1945.44 54.85L1955.10 54.85" fill="none" stroke="#c6c6c6" stroke-width="2.6" stroke-linejoin="round"/>
<path d="M1964.90 74.10L1974.84 74.10L1974.84 63.95" fill="none" stroke="#c6c6c6" stroke-width="2.6" stroke-linejoin="round"/>
<path d="M18.10 508.40V505.00H21.50M53.60 505.00H57.00V508.40M57.00 540.00V543.40H53.60M21.50 543.40H18.10V540.00M25.62 505.00h5.20M25.62 543.40h5.20M18.10 512.52v5.20M57.00 512.52v5.20M34.95 505.00h5.20M34.95 543.40h5.20M18.10 521.85v5.20M57.00 521.85v5.20M44.27 505.00h5.20M44.27 543.40h5.20M18.10 531.17v5.20M57.00 531.17v5.20" fill="none" stroke="#7c7c7c" stroke-width="2"/>
<path d="M30.2 517.2L44.6 531.6M44.6 517.2L30.2 531.6" fill="none" stroke="#7c7c7c" stroke-width="2.6" stroke-linecap="round"/>
<rect x="17.1" y="583.4" width="40.9" height="40.6" fill="#c6c6c6"/>
<path d="M17.1 668H47V679H58V709H27.8V698H17.1Z" fill="#de7f0d"/>
<rect x="17.1" y="752.8" width="29.9" height="30" fill="#c6c6c6"/>
<rect x="28.8" y="764.9" width="28.2" height="27.8" fill="#202020" stroke="#c6c6c6" stroke-width="2"/>
<rect x="18.1" y="838.9" width="27.9" height="27.1" fill="none" stroke="#c6c6c6" stroke-width="2"/>
<rect x="28.8" y="850" width="28.2" height="27" fill="none" stroke="#c6c6c6" stroke-width="2"/>
<rect x="27.8" y="849" width="19.2" height="18" fill="#c6c6c6"/>
<path d="M19.6 928.6H55.4M19.6 946.3H55.4" stroke="#c6c6c6" stroke-width="2.4" stroke-linecap="round"/>
<circle cx="29.2" cy="928.6" r="3.4" fill="#202020" stroke="#c6c6c6" stroke-width="1.9"/>
<circle cx="45.2" cy="946.3" r="3.4" fill="#202020" stroke="#c6c6c6" stroke-width="1.9"/>
<circle cx="44" cy="1344.6" r="19.4" fill="#282828"/>
<circle cx="132.3" cy="1344.6" r="19.4" fill="#2b2b2b"/>
<path d="M40.80 1335L34.00 1340.7L40.80 1346.6M34.60 1340.7H46.50C55.00 1340.7 55.00 1353.6 46.50 1353.6H42.00" fill="none" stroke="#c0c0c0" stroke-width="2.5" stroke-linejoin="miter"/>
<path d="M135.50 1335L142.30 1340.7L135.50 1346.6M141.70 1340.7H129.80C121.30 1340.7 121.30 1353.6 129.80 1353.6H134.30" fill="none" stroke="#5c5c5c" stroke-width="2.5" stroke-linejoin="miter"/>
</svg>
<!--ICONS1-->
<div id="badge">2</div>
<div id="brushsize">8</div>
</body>
</html>
